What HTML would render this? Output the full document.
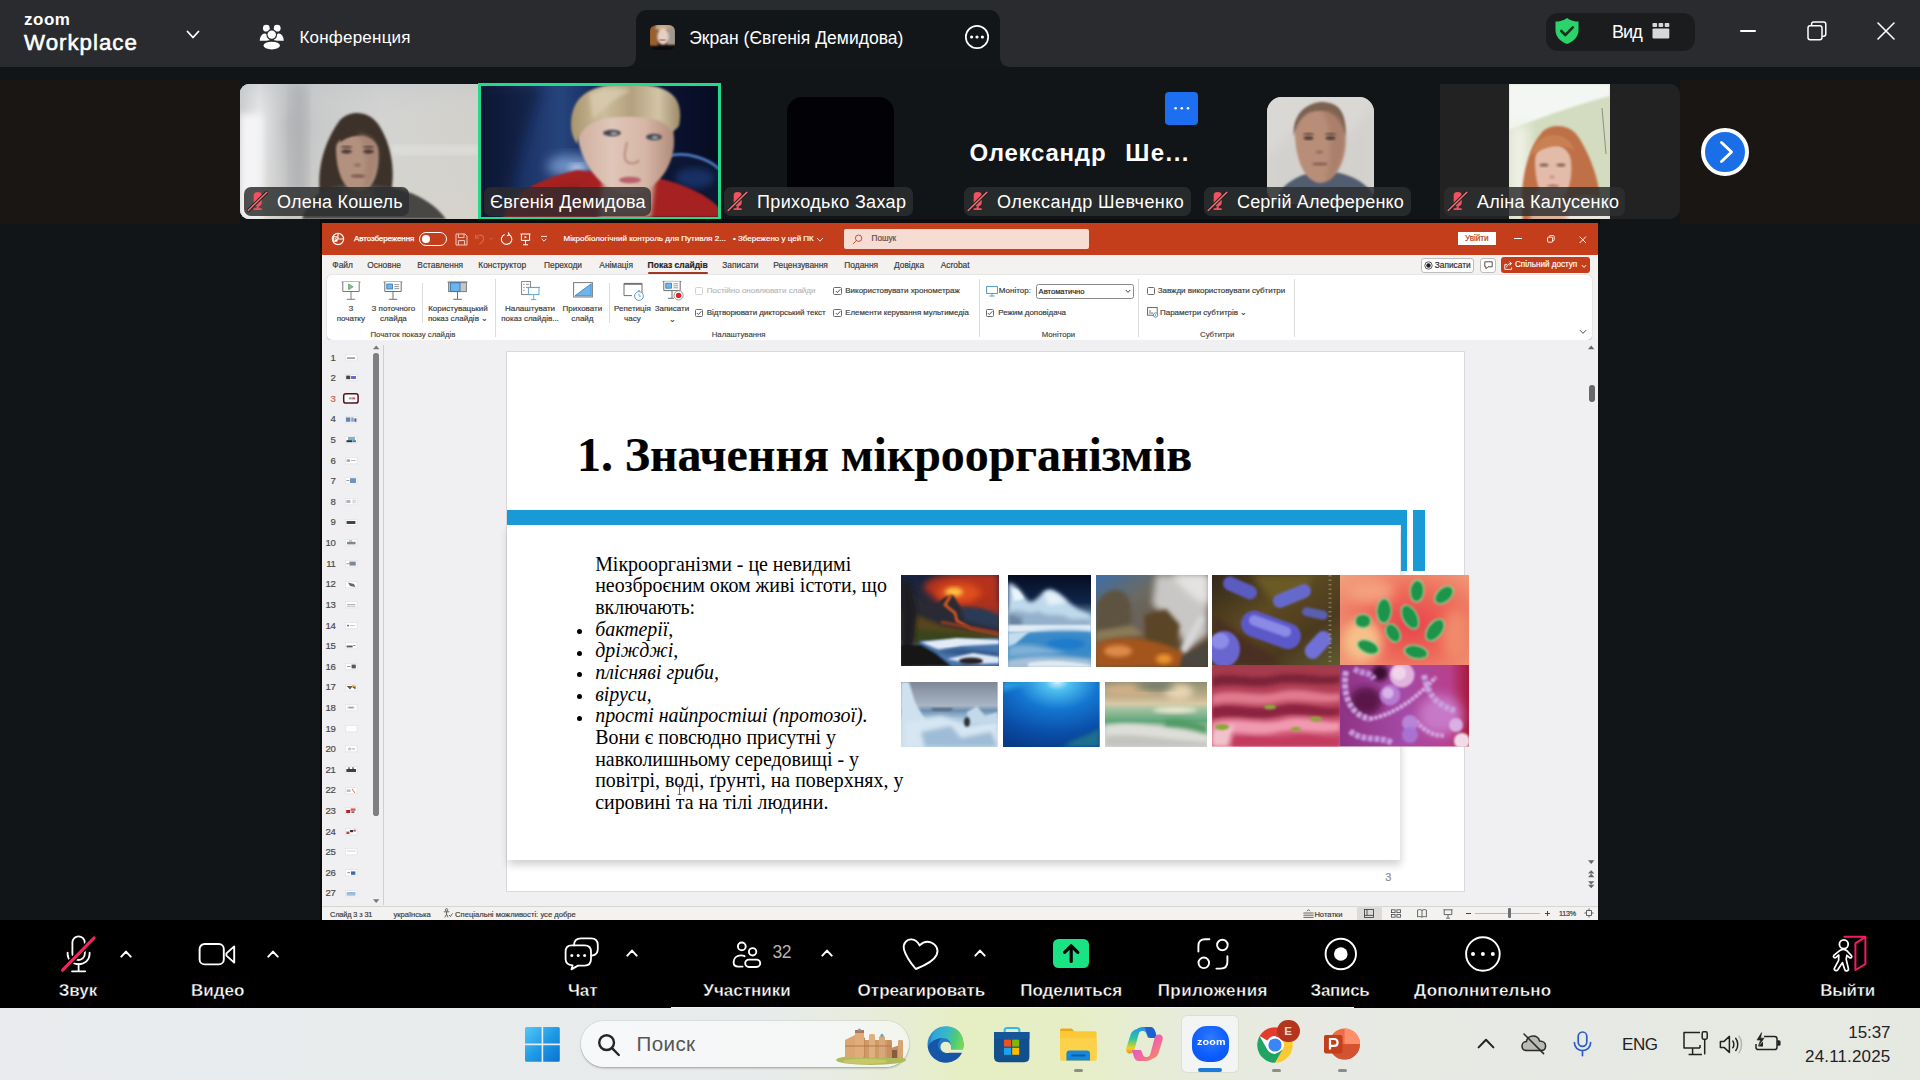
<!DOCTYPE html>
<html lang="ru">
<head>
<meta charset="utf-8">
<title>Zoom Workplace</title>
<style>
*{box-sizing:border-box;margin:0;padding:0}
html,body{width:1920px;height:1080px;overflow:hidden;background:#111518}
body{position:relative;font-family:"Liberation Sans",sans-serif;color:#fff}
.abs{position:absolute}
.t{position:absolute;white-space:nowrap;line-height:1}
svg{position:absolute;overflow:visible}
</style>
</head>
<body>
<!-- ===== Zoom top bar ===== -->
<div class="abs" style="left:0;top:0;width:1920px;height:66.5px;background:#2a2b2e"></div>
<div class="t" style="left:24px;top:11.4px;font-size:17px;font-weight:700;letter-spacing:.5px">zoom</div>
<div class="t" style="left:24px;top:31.5px;font-size:22.3px;letter-spacing:1px;-webkit-text-stroke:.55px #fff">Workplace</div>
<svg style="left:186px;top:30px" width="14" height="10" viewBox="0 0 14 10"><path d="M1.5 1.5 L7 7.5 L12.5 1.5" fill="none" stroke="#fff" stroke-width="1.8" stroke-linecap="round" stroke-linejoin="round"/></svg>
<!-- people icon -->
<svg style="left:259px;top:24px" width="26" height="26" viewBox="0 0 26 26" fill="#fff">
<circle cx="7.3" cy="4.2" r="3.4"/><circle cx="18.2" cy="4.2" r="3.4"/>
<path d="M.7 16.800 A5 7.300 0 0 1 10.700 16.800Z"/><path d="M14.800 16.800 A5 7.300 0 0 1 24.800 16.800Z"/>
<circle cx="12.750" cy="10.600" r="5.400" fill="#2a2b2e"/><circle cx="12.750" cy="10.600" r="4.200"/>
<ellipse cx="12.750" cy="21.300" rx="9.300" ry="5.200" fill="#2a2b2e"/><ellipse cx="12.750" cy="21.600" rx="8.200" ry="3.900"/>
</svg>
<div class="t" style="left:299.4px;top:29.4px;font-size:17px;letter-spacing:.22px">Конференция</div>
<!-- active tab -->
<div class="abs" style="left:636px;top:10px;width:364px;height:58px;background:#121619;border-radius:11px 11px 0 0"></div>
<svg style="left:625px;top:56px" width="11" height="11" viewBox="0 0 11 11"><path d="M11 0 L11 11 L0 11 Q11 11 11 0Z" fill="#121619"/></svg>
<svg style="left:1000px;top:56px" width="11" height="11" viewBox="0 0 11 11"><path d="M0 0 L0 11 L11 11 Q0 11 0 0Z" fill="#121619"/></svg>
<!-- avatar -->
<div class="abs" style="left:650px;top:25px;width:25px;height:25px;border-radius:6px;overflow:hidden;background:#2a1c14">
 <div class="abs" style="left:-1px;top:1px;width:9px;height:21px;background:#9a5f2c;filter:blur(1.3px)"></div>
 <div class="abs" style="left:17px;top:-1px;width:9px;height:21px;background:#a3988d;filter:blur(1.3px)"></div>
 <div class="abs" style="left:5px;top:-2px;width:15px;height:8px;border-radius:50%;background:#c6ab88;filter:blur(1px)"></div>
 <div class="abs" style="left:6.500px;top:3px;width:12px;height:17px;border-radius:50%;background:#e4cfc3;filter:blur(.9px)"></div>
 <div class="abs" style="left:9px;top:14px;width:7px;height:2px;border-radius:50%;background:#c08a84;filter:blur(.6px)"></div>
 <div class="abs" style="left:-2px;top:20.500px;width:29px;height:7px;background:#0c0a0a;filter:blur(1.2px)"></div>
</div>
<div class="t" style="left:689.2px;top:29.7px;font-size:17.5px;letter-spacing:.03px">Экран (Євгенія Демидова)</div>
<svg style="left:964px;top:24px" width="26" height="26" viewBox="0 0 26 26"><circle cx="13" cy="13" r="11.2" fill="none" stroke="#fff" stroke-width="1.7"/><circle cx="7.6" cy="13" r="1.6" fill="#fff"/><circle cx="13" cy="13" r="1.6" fill="#fff"/><circle cx="18.4" cy="13" r="1.6" fill="#fff"/></svg>
<!-- view pill -->
<div class="abs" style="left:1546px;top:13px;width:149px;height:38px;border-radius:12px;background:#1b1c1e"></div>
<svg style="left:1554px;top:17px" width="26" height="28" viewBox="0 0 26 28"><path d="M13 1 C9.5 3.6 5.5 4.6 1.5 4.6 V13 C1.5 20 6.5 24.6 13 27 C19.5 24.6 24.5 20 24.5 13 V4.6 C20.5 4.6 16.5 3.6 13 1Z" fill="#2bd46a"/><path d="M7.3 14 L11.3 18 L18.8 10.4" fill="none" stroke="#17301f" stroke-width="2.6" stroke-linecap="round" stroke-linejoin="round"/></svg>
<div class="t" style="left:1612px;top:23px;font-size:18px;letter-spacing:-.9px">Вид</div>
<svg style="left:1652px;top:22px" width="19" height="18" viewBox="0 0 19 18" fill="#d8d8d8"><rect x="0.5" y="1" width="4.6" height="4" rx=".8"/><rect x="6.6" y="1" width="4.6" height="4" rx=".8"/><rect x="12.7" y="1" width="4.6" height="4" rx=".8"/><rect x="0.5" y="6.4" width="16.8" height="10" rx="1.2"/></svg>
<!-- window controls -->
<div class="abs" style="left:1740px;top:30px;width:16px;height:2px;background:#fff;border-radius:1px"></div>
<svg style="left:1807px;top:21px" width="20" height="20" viewBox="0 0 20 20" fill="none" stroke="#fff" stroke-width="1.5"><rect x="1" y="4.8" width="14" height="14" rx="2.2"/><path d="M4.6 4.6 V3.2 Q4.6 1 6.8 1 H16.6 Q18.8 1 18.8 3.2 V13 Q18.8 15.2 16.6 15.2 H15.2"/></svg>
<svg style="left:1877px;top:22px" width="18" height="18" viewBox="0 0 18 18"><path d="M1 1 L17 17 M17 1 L1 17" stroke="#fff" stroke-width="1.6" stroke-linecap="round"/></svg>
<!-- ===== participant strip ===== -->
<svg width="0" height="0" style="left:0;top:0"><defs>
<symbol id="mm" viewBox="0 0 22 22"><path d="M7 4.6 Q7 1 11.2 1 Q15.4 1 15.4 4.6 V12.4 Q15.4 16 11.2 16 Q7 16 7 12.4Z" fill="#f4505e"/><path d="M10 16 h2.4 v2 h3 v1.8 h-8.4 v-1.8 h3z" fill="#f4505e"/><path d="M1.2 20.4 L20.8 1.4" stroke="#20201f" stroke-width="3.6" stroke-linecap="round"/><path d="M1.2 20.4 L20.8 1.4" stroke="#f0737a" stroke-width="1.5" stroke-linecap="round"/></symbol>
<filter id="b1" x="-20%" y="-20%" width="140%" height="140%"><feGaussianBlur stdDeviation="1"/></filter>
<filter id="b2" x="-20%" y="-20%" width="140%" height="140%"><feGaussianBlur stdDeviation="2"/></filter>
<filter id="b3" x="-20%" y="-20%" width="140%" height="140%"><feGaussianBlur stdDeviation="3.5"/></filter>
<filter id="b6" x="-30%" y="-30%" width="160%" height="160%"><feGaussianBlur stdDeviation="6"/></filter>
</defs></svg>
<style>
.lbl{position:absolute;top:187px;height:29px;border-radius:7px;background:rgba(44,46,48,.845)}
.lbl svg{left:3.4px;top:3.8px}
.lbl span{position:absolute;left:33px;top:5.7px;font-size:18px;line-height:1;white-space:nowrap;color:#fff}
</style>
<div class="abs" style="left:0;top:80px;width:240px;height:144px;background:#1a1614"></div>
<div class="abs" style="left:1680px;top:80px;width:240px;height:144px;background:#1a1614"></div>

<!-- tile 1 -->
<div class="abs" style="left:240px;top:84px;width:240px;height:135px;border-radius:9px 0 0 9px;overflow:hidden;background:#cfd0d0">
<svg width="240" height="135" viewBox="0 0 240 135" style="left:0;top:0">
<defs><linearGradient id="t1g" x1="0" x2="1" y1="0" y2="0"><stop offset="0" stop-color="#c9cacc"/><stop offset=".08" stop-color="#e9eaec"/><stop offset=".2" stop-color="#b9bbbd"/><stop offset=".33" stop-color="#c8c9c9"/><stop offset=".6" stop-color="#d3d3d1"/><stop offset="1" stop-color="#d2d0ca"/></linearGradient>
<linearGradient id="t1v" x1="0" x2="0" y1="0" y2="1"><stop offset="0" stop-color="#c4c7ca" stop-opacity=".55"/><stop offset=".3" stop-color="#d6d7d7" stop-opacity="0"/><stop offset="1" stop-color="#d8d4c8" stop-opacity=".5"/></linearGradient></defs>
<rect width="240" height="135" fill="url(#t1g)"/><rect width="240" height="135" fill="url(#t1v)"/>
<rect x="0" y="30" width="22" height="105" fill="#f4f4f6" filter="url(#b3)"/>
<rect x="52" y="0" width="14" height="110" fill="#a9abae" filter="url(#b6)" opacity=".8"/>
<rect x="150" y="62" width="90" height="8" fill="#e4e4e2" filter="url(#b3)" opacity=".7"/>
<!-- hair -->
<path d="M80 110 C76 80 88 52 100 36 C110 26 128 26 138 40 C152 60 156 90 150 112 Z" fill="#3e3129" filter="url(#b1)"/>
<!-- body -->
<path d="M62 135 C70 108 90 100 116 100 C150 100 186 108 206 135Z" fill="#4a4744" filter="url(#b1)"/>
<!-- face -->
<path d="M96 64 C96 48 136 46 138 66 C140 90 132 108 118 108 C104 108 96 88 96 64Z" fill="#b3917f" filter="url(#b1)"/>
<path d="M100 50 C110 38 128 40 136 52 C124 48 112 50 100 58Z" fill="#3e3129" filter="url(#b1)"/>
<path d="M118 50 C130 50 138 58 138 70 C138 88 130 104 122 107 C128 92 128 66 118 50Z" fill="#a17f6e" opacity=".7" filter="url(#b2)"/>
<ellipse cx="106.500" cy="67.500" rx="5.400" ry="2.200" fill="#4e3b34" filter="url(#b1)"/><ellipse cx="128.500" cy="67.500" rx="5.400" ry="2.200" fill="#4e3b34" filter="url(#b1)"/>
<ellipse cx="106.500" cy="63" rx="6" ry="1.200" fill="#5a463c" filter="url(#b1)"/><ellipse cx="128.500" cy="63" rx="6" ry="1.200" fill="#5a463c" filter="url(#b1)"/>
<ellipse cx="117.500" cy="81" rx="3.400" ry="1.800" fill="#94705f" filter="url(#b1)"/>
<ellipse cx="118" cy="92" rx="7.400" ry="1.700" fill="#835a52" filter="url(#b1)"/>
<path d="M104 104 C112 110 124 110 132 104 L134 114 H102Z" fill="#957565" filter="url(#b2)"/>
</svg></div>
<div class="lbl" style="left:244px;width:165px"><svg width="21" height="21"><use href="#mm"/></svg><span style="letter-spacing:.2px">Олена Кошель</span></div>

<!-- tile 2 (active speaker) -->
<div class="abs" style="left:481px;top:86px;width:238px;height:131px;overflow:hidden;background:#0d1a3a">
<svg width="238" height="131" viewBox="0 0 238 131" style="left:0;top:0;overflow:hidden">
<defs><linearGradient id="t2g" x1="0" x2="1" y1="0" y2="0"><stop offset="0" stop-color="#0b1736"/><stop offset=".18" stop-color="#1c3468"/><stop offset=".34" stop-color="#26447c"/><stop offset=".5" stop-color="#14285a"/><stop offset=".8" stop-color="#0a1230"/><stop offset="1" stop-color="#070c20"/></linearGradient>
<linearGradient id="t2h" x1="0" x2="1" y1="0" y2="0"><stop offset="0" stop-color="#a8956f"/><stop offset=".3" stop-color="#cdbd9c"/><stop offset=".55" stop-color="#b3a07f"/><stop offset=".8" stop-color="#d2c4a6"/><stop offset="1" stop-color="#9c8a68"/></linearGradient>
<linearGradient id="t2f" x1="0" x2="1" y1="0" y2="0"><stop offset="0" stop-color="#cfae9f"/><stop offset=".35" stop-color="#e0c6b8"/><stop offset=".7" stop-color="#d6b6a6"/><stop offset="1" stop-color="#b08b7b"/></linearGradient></defs>
<rect width="238" height="131" fill="url(#t2g)"/>
<path d="M0 0 H60 L20 131 H0Z" fill="#0a1430" opacity=".6" filter="url(#b6)"/>
<ellipse cx="92" cy="80" rx="26" ry="11" fill="#8fb2e6" opacity=".7" filter="url(#b6)"/>
<ellipse cx="96" cy="82" rx="8" ry="4" fill="#dfeaff" opacity=".7" filter="url(#b3)"/>
<path d="M186 70 C206 66 228 74 238 84 V131 H176Z" fill="#0b1530" filter="url(#b1)"/>
<path d="M186 70 C206 65 228 73 238 83" stroke="#5a92e4" stroke-width="2.2" fill="none" filter="url(#b1)"/>
<ellipse cx="214" cy="92" rx="20" ry="10" fill="#1a3a78" opacity=".7" filter="url(#b3)"/>
<!-- red sweater -->
<path d="M22 131 C30 106 62 92 96 84 L176 92 C204 98 228 110 238 122 V131Z" fill="#a62124" filter="url(#b1)"/>
<path d="M40 131 C52 112 76 100 100 96 L96 131Z" fill="#8c1a1e" opacity=".6" filter="url(#b3)"/>
<!-- neck -->
<path d="M122 92 L174 96 L170 131 H118Z" fill="#c49f8f" filter="url(#b2)"/>
<!-- face -->
<path d="M96 40 C96 16 188 18 192 44 C198 72 180 104 152 108 C124 110 96 78 96 40Z" fill="url(#t2f)" filter="url(#b1)"/>
<!-- hair -->
<path d="M90 40 C90 10 108 -2 148 -2 C188 -2 204 10 198 40 C194 44 192 46 190 46 C186 36 178 34 166 32 C150 30 130 30 118 34 C106 38 98 46 96 58 C92 52 90 46 90 40Z" fill="url(#t2h)" filter="url(#b1)"/>
<path d="M108 8 C122 2 140 2 150 4 C138 10 124 20 112 34Z" fill="#d9ccb0" opacity=".8" filter="url(#b2)"/>
<ellipse cx="131" cy="47" rx="9" ry="3.2" fill="#4a4650" filter="url(#b1)"/><ellipse cx="173" cy="51" rx="8" ry="3.2" fill="#4a4650" filter="url(#b1)"/>
<ellipse cx="133" cy="47.6" rx="3.4" ry="2.2" fill="#8a9aa0" filter="url(#b1)"/><ellipse cx="174" cy="51.6" rx="3.2" ry="2.2" fill="#8a9aa0" filter="url(#b1)"/>
<path d="M146 56 C144 66 142 72 146 76 C150 78 156 78 158 74" stroke="#b88f80" stroke-width="2" fill="none" filter="url(#b1)"/>
<ellipse cx="149" cy="94" rx="11" ry="3.2" fill="#b8606c" filter="url(#b1)"/>
</svg></div>
<div class="abs" style="left:478px;top:83px;width:243px;height:137px;border:3px solid #23d98c"></div>
<div class="lbl" style="left:484px;width:167px;background:rgba(46,44,46,.8)"><span style="left:6px;letter-spacing:.25px">Євгенія Демидова</span></div>

<!-- tile 3 -->
<div class="abs" style="left:787px;top:97px;width:107px;height:107px;border-radius:15px;background:#020206"></div>
<div class="lbl" style="left:724px;width:189px"><svg width="21" height="21"><use href="#mm"/></svg><span style="letter-spacing:.35px">Приходько Захар</span></div>

<!-- tile 4 -->
<div class="t" style="left:969.6px;top:140.8px;font-size:24px;font-weight:700;letter-spacing:.78px">Олександр <span style="position:absolute;left:155.6px;top:0;letter-spacing:1.45px">Ше...</span></div>
<div class="abs" style="left:1165px;top:92px;width:33px;height:33px;border-radius:4px;background:#1b6ff0"></div>
<svg style="left:1165px;top:92px" width="33" height="33" fill="#fff"><circle cx="10.6" cy="16.3" r="1.3"/><circle cx="16.8" cy="16.3" r="1.3"/><circle cx="23" cy="16.3" r="1.3"/></svg>
<div class="lbl" style="left:964px;width:227px"><svg width="21" height="21"><use href="#mm"/></svg><span style="letter-spacing:.42px">Олександр Шевченко</span></div>

<!-- tile 5 -->
<div class="abs" style="left:1267px;top:97px;width:107px;height:107px;border-radius:15px;overflow:hidden;background:#d9d7d4">
<svg width="107" height="107" viewBox="0 0 107 107" style="left:0;top:0">
<rect width="107" height="107" fill="#dad8d5"/>
<path d="M0 60 L40 20 L70 50 L107 10 V107 H0Z" fill="#cfcdca" opacity=".6" filter="url(#b3)"/>
<path d="M8 107 C12 86 34 76 54 74 C78 74 100 84 107 100 V107Z" fill="#525d70" filter="url(#b1)"/>
<path d="M28 36 C28 4 78 4 78 38 C80 60 70 84 54 86 C38 86 28 62 28 36Z" fill="#b88e78" filter="url(#b1)"/>
<path d="M27 40 C24 10 50 2 62 6 C76 8 80 24 78 40 C74 22 64 14 52 14 C38 14 30 24 27 40Z" fill="#7c6250" filter="url(#b1)"/>
<path d="M56 14 C70 14 78 24 78 38 C79 58 70 80 58 85 C66 66 66 34 56 14Z" fill="#a47a66" opacity=".7" filter="url(#b2)"/>
<ellipse cx="41.500" cy="41" rx="5" ry="2" fill="#54403a" filter="url(#b1)"/><ellipse cx="63.500" cy="41" rx="5" ry="2" fill="#54403a" filter="url(#b1)"/>
<ellipse cx="41.500" cy="37" rx="6" ry="1.200" fill="#6a5040" filter="url(#b1)"/><ellipse cx="63.500" cy="37" rx="6" ry="1.200" fill="#6a5040" filter="url(#b1)"/>
<ellipse cx="52.500" cy="55" rx="3.600" ry="1.800" fill="#9a6f5c" filter="url(#b1)"/>
<ellipse cx="53" cy="67" rx="8" ry="1.600" fill="#8c5e52" filter="url(#b1)"/>
</svg></div>
<div class="lbl" style="left:1204px;width:207px"><svg width="21" height="21"><use href="#mm"/></svg><span style="letter-spacing:.17px">Сергій Алеференко</span></div>

<!-- tile 6 -->
<div class="abs" style="left:1440px;top:84px;width:240px;height:135px;border-radius:0 10px 10px 0;background:#222222;overflow:hidden">
<svg width="101" height="135" viewBox="0 0 101 135" style="left:69px;top:0;overflow:hidden">
<rect width="101" height="135" fill="#d3dcc0"/>
<path d="M0 0 H101 V12 C70 20 30 34 0 46Z" fill="#f3f6f2" filter="url(#b1)"/>
<rect x="0" y="40" width="20" height="95" fill="#eef0e4" filter="url(#b6)"/>
<g transform="translate(0,5)"><path d="M14 135 C10 100 16 62 34 42 C44 34 60 36 68 46 C82 66 92 96 92 120 L96 135Z" fill="#bf7046" filter="url(#b1)"/>
<path d="M26 72 C26 50 60 50 62 72 C64 92 58 112 46 114 C32 114 26 94 26 72Z" fill="#e2bca8" filter="url(#b1)"/>
<path d="M22 66 C26 42 58 38 66 62 C54 54 40 56 22 66Z" fill="#c98152" filter="url(#b1)"/>
<ellipse cx="35" cy="76" rx="4.600" ry="1.800" fill="#8a6a5c" filter="url(#b1)"/><ellipse cx="52" cy="76" rx="4.600" ry="1.800" fill="#8a6a5c" filter="url(#b1)"/>
<ellipse cx="43" cy="88" rx="2.800" ry="1.600" fill="#c9917c" filter="url(#b1)"/>
<ellipse cx="44" cy="97" rx="6" ry="1.500" fill="#b46e66" filter="url(#b1)"/>
<path d="M26 104 C36 96 50 100 54 108 L60 135 H20Z" fill="#dcb29c" filter="url(#b2)"/>
<path d="M60 112 C76 104 92 108 101 116 V135 H56Z" fill="#ece6e0" filter="url(#b2)"/></g>
<path d="M93 24 L97 70" stroke="#8d8f7e" stroke-width="1" />
</svg></div>
<div class="lbl" style="left:1444px;width:181px"><svg width="21" height="21"><use href="#mm"/></svg><span style="letter-spacing:.27px">Аліна Калусенко</span></div>

<!-- next button -->
<div class="abs" style="left:1701px;top:128px;width:48px;height:48px;border-radius:50%;background:#1a6fe9;border:4.5px solid #fff"></div>
<svg style="left:1701px;top:128px" width="48" height="48"><path d="M20.5 14.5 L30.5 24 L20.5 33.5" fill="none" stroke="#fff" stroke-width="2.9" stroke-linecap="round" stroke-linejoin="round"/></svg>
<!-- ===== PowerPoint window ===== -->
<style>
.pp{position:absolute;left:322px;top:224px;width:1276px;height:696px;background:#f1f0f1;overflow:hidden;font-family:"Liberation Sans",sans-serif;color:#3b3a39}
.pp .t{color:#3b3a39;-webkit-text-stroke:.18px currentColor}
.pp .w{color:#fff}
.rb{position:absolute;-webkit-text-stroke:.18px currentColor;font-size:8px;line-height:10.6px;text-align:center;white-space:nowrap;color:#3b3a39;transform:translateX(-50%)}
.ck{position:absolute;width:8.4px;height:8.4px;border:1px solid #6b6b6b;border-radius:1.5px;background:#fff}
.ck svg{left:.2px;top:.4px}
.gl{position:absolute;-webkit-text-stroke:.15px currentColor;top:106.5px;font-size:7.8px;line-height:1;white-space:nowrap;color:#444}
.vs{position:absolute;width:1px;background:#dcdcdc}
</style>
<div class="abs" style="left:320px;top:219px;width:1280px;height:5px;background:#0c0c0e"></div><div class="abs" style="left:320px;top:219px;width:2px;height:701px;background:#0b0b0d"></div><div class="abs" style="left:322px;top:223px;width:1276px;height:2px;background:#c43e1c"></div>
<div class="pp">
<!-- title bar -->
<div class="abs" style="left:0;top:0;width:1276px;height:31px;background:#c43e1c"></div>
<svg style="left:9px;top:8px" width="14" height="14" viewBox="0 0 14 14"><circle cx="7" cy="7" r="5.6" fill="none" stroke="#fff" stroke-width="1.2"/><path d="M7 1.4 V7 H12.6" fill="none" stroke="#fff" stroke-width="1.1"/><rect x="1.6" y="4.2" width="5" height="5.6" rx=".8" fill="#fff"/><path d="M3.4 8.6 V5.4 H4.6 Q5.6 5.4 5.6 6.3 Q5.6 7.2 4.6 7.2 H3.4" fill="none" stroke="#c43e1c" stroke-width=".8"/></svg>
<div class="t w" style="left:32px;top:11.1px;font-size:8px;letter-spacing:-.1px;-webkit-text-stroke:.25px #fff">Автозбереження</div>
<div class="abs" style="left:97px;top:8px;width:28px;height:13.5px;border:1.1px solid #fff;border-radius:7px"></div>
<div class="abs" style="left:100px;top:11px;width:7.6px;height:7.6px;border-radius:50%;background:#fff"></div>
<!-- save -->
<svg style="left:132.5px;top:8.5px" width="13" height="13" viewBox="0 0 13 13" fill="none" stroke="#f3c9bd" stroke-width="1"><path d="M1 1 H10 L12 3 V12 H1Z"/><path d="M3.4 1 V4.6 H9 V1"/><path d="M3.4 12 V7.6 H9.6 V12"/></svg>
<!-- undo (disabled) -->
<svg style="left:152px;top:9px" width="22" height="12" viewBox="0 0 22 12" fill="none" stroke="#d8694c" stroke-width="1.1"><path d="M1.6 1.4 V5 H5.2"/><path d="M1.8 4.8 C3.6 1.4 8.6 1.2 9.6 4.8 C10.2 7.4 8 9.4 5.4 11"/><path d="M15.5 5 l1.6 1.6 l1.6 -1.6" stroke-width=".9"/></svg>
<!-- redo -->
<svg style="left:178px;top:8px" width="13" height="14" viewBox="0 0 13 14" fill="none" stroke="#fff" stroke-width="1.1"><path d="M4.6 2.4 A5.2 5.2 0 1 0 9 2.6"/><path d="M8.2 .6 L9.4 2.8 L7 3.8"/></svg>
<!-- present -->
<svg style="left:197.5px;top:8.5px" width="11" height="13" viewBox="0 0 11 13" fill="none" stroke="#fff" stroke-width="1"><path d="M.5 1 H10.5"/><path d="M1.4 1 V7.4 H9.6 V1"/><path d="M5.5 7.4 V11.6 M3 11.8 H8"/><path d="M4.6 2.8 L6.8 4.2 L4.6 5.6Z" fill="#fff" stroke="none"/></svg>
<svg style="left:218px;top:11px" width="8" height="8" viewBox="0 0 8 8" fill="none" stroke="#fff" stroke-width=".9"><path d="M1 1.4 H7"/><path d="M1.6 3.8 L4 6.2 L6.4 3.8"/></svg>
<div class="t w" style="left:241.5px;top:11.3px;font-size:8px;letter-spacing:.03px">Мікробіологічний контроль для Путивля 2...</div>
<div class="t w" style="left:411px;top:11.3px;font-size:8px">• Збережено у цей ПК</div>
<svg style="left:494px;top:12.5px" width="8" height="6" viewBox="0 0 8 6" fill="none" stroke="#fff" stroke-width=".9"><path d="M1 1 L4 4.2 L7 1"/></svg>
<!-- search -->
<div class="abs" style="left:521.5px;top:4.5px;width:245px;height:20.5px;border-radius:2px;background:#f7dcd4"></div>
<svg style="left:530px;top:9.5px" width="11" height="11" viewBox="0 0 11 11" fill="none" stroke="#b5553c" stroke-width="1"><circle cx="6.6" cy="4.2" r="3.2"/><path d="M4.4 6.6 L1 10"/></svg>
<div class="t" style="left:549.5px;top:11.1px;font-size:8.2px;color:#5b4a45">Пошук</div>
<!-- sign in / window buttons -->
<div class="abs" style="left:1136px;top:8.3px;width:38px;height:12.4px;background:#fff"></div>
<div class="t" style="left:1143px;top:10.6px;font-size:8.2px;color:#b33c24;letter-spacing:-.05px">Увійти</div>
<div class="abs" style="left:1192px;top:14px;width:8px;height:1px;background:#fff"></div>
<svg style="left:1224.5px;top:11px" width="8" height="8" viewBox="0 0 8 8" fill="none" stroke="#fff" stroke-width=".9"><rect x=".6" y="2.2" width="5" height="5" rx=".8"/><path d="M2.4 2 V1.4 Q2.4 .6 3.2 .6 H6.4 Q7.2 .6 7.2 1.4 V4.8 Q7.2 5.6 6.4 5.6 H5.8"/></svg>
<svg style="left:1256.5px;top:11.5px" width="8" height="8" viewBox="0 0 8 8"><path d="M.6 .6 L7 7 M7 .6 L.6 7" stroke="#fff" stroke-width=".95"/></svg>

<!-- tab row -->
<div class="abs" style="left:0;top:31px;width:1276px;height:84px;background:#f3f2f1"></div>
<div class="t" style="left:10.3px;top:36.6px;font-size:8.4px">Файл</div>
<div class="t" style="left:45.3px;top:36.6px;font-size:8.4px">Основне</div>
<div class="t" style="left:95.3px;top:36.6px;font-size:8.4px">Вставлення</div>
<div class="t" style="left:156.3px;top:36.6px;font-size:8.4px">Конструктор</div>
<div class="t" style="left:222px;top:36.6px;font-size:8.4px">Переходи</div>
<div class="t" style="left:277.3px;top:36.6px;font-size:8.4px">Анімація</div>
<div class="t" style="left:325.6px;top:36.6px;font-size:8.5px;font-weight:700;color:#252423">Показ слайдів</div>
<div class="abs" style="left:325.6px;top:48.3px;width:60.4px;height:1.6px;background:#a4371f;border-radius:1px"></div>
<div class="t" style="left:400.3px;top:36.6px;font-size:8.4px">Записати</div>
<div class="t" style="left:451.3px;top:36.6px;font-size:8.4px">Рецензування</div>
<div class="t" style="left:522.3px;top:36.6px;font-size:8.4px">Подання</div>
<div class="t" style="left:572px;top:36.6px;font-size:8.4px">Довідка</div>
<div class="t" style="left:618.7px;top:36.6px;font-size:8.4px">Acrobat</div>
<!-- right buttons -->
<div class="abs" style="left:1098.8px;top:33.6px;width:53.6px;height:15.2px;border:1px solid #bdbdbd;border-radius:3px;background:#fff"></div>
<svg style="left:1101.6px;top:36.8px" width="9" height="9" viewBox="0 0 9 9"><circle cx="4.5" cy="4.5" r="3.7" fill="none" stroke="#333" stroke-width=".8"/><circle cx="4.5" cy="4.5" r="2.2" fill="#222"/></svg>
<div class="t" style="left:1112.8px;top:37px;font-size:8.3px;color:#2b2b2b">Записати</div>
<div class="abs" style="left:1158px;top:33.6px;width:15.6px;height:15.2px;border:1px solid #bdbdbd;border-radius:3px;background:#fff"></div>
<svg style="left:1161.6px;top:37px" width="9" height="9" viewBox="0 0 9 9" fill="none" stroke="#333" stroke-width=".85"><path d="M.8 .8 H8.2 V5.8 H4 L2 7.8 V5.8 H.8Z"/></svg>
<div class="abs" style="left:1179px;top:33.2px;width:89px;height:16px;border-radius:3px;background:#c43e1c"></div>
<svg style="left:1182.4px;top:36.6px" width="10" height="9" viewBox="0 0 10 9" fill="none" stroke="#fff" stroke-width=".9"><path d="M3 3.4 H.8 V8.4 H7.6 V6.4"/><path d="M2.6 6.2 C3.2 3.6 5 2.6 7 2.6 M5.6 .8 L7.6 2.6 L5.6 4.4"/></svg>
<div class="t w" style="left:1193px;top:37px;font-size:8.2px;letter-spacing:-.05px;-webkit-text-stroke:.15px #fff">Спільний доступ</div>
<svg style="left:1259px;top:39.5px" width="6" height="5" viewBox="0 0 6 5" fill="none" stroke="#fff" stroke-width=".9"><path d="M.8 1 L3 3.4 L5.2 1"/></svg>

<!-- ribbon panel -->
<div class="abs" style="left:5px;top:51px;width:1265px;height:64.5px;background:#fff;border-radius:5px;box-shadow:0 .6px 1.6px rgba(0,0,0,.22)"></div>
<!-- ribbon: group 1 -->
<svg style="left:19px;top:57px" width="20" height="19" viewBox="0 0 20 19" fill="none" stroke="#7a7a7a" stroke-width="1"><path d="M.6 1 H19.4"/><path d="M1.8 1 V10.5 H18.2 V1" fill="#fff"/><path d="M10 10.5 V18 M5.8 18.3 H14.2"/><path d="M7.6 3 L12.2 5.8 L7.6 8.6Z" fill="#7fc48a" stroke="#4e9a5c" stroke-width=".7"/></svg>
<div class="rb" style="left:28.8px;top:79.7px">З<br>початку</div>
<svg style="left:61.4px;top:57px" width="20" height="19" viewBox="0 0 20 19" fill="none" stroke="#6f6f6f" stroke-width="1"><path d="M.6 1 H19.4"/><path d="M1.8 1 V10.5 H18.2 V1" fill="#fff"/><path d="M10 10.5 V18 M5.8 18.3 H14.2"/><rect x="3.8" y="3" width="5.6" height="5" fill="#6eb5ee" stroke="#2f78b8" stroke-width=".8"/><path d="M11.4 3.6 H16.2 M11.4 5.6 H16.2 M11.4 7.6 H16.2" stroke-width=".7"/></svg>
<div class="rb" style="left:71.4px;top:79.7px">З поточного<br>слайда</div>
<div class="vs" style="left:100.4px;top:59px;height:40px"></div>
<svg style="left:125.4px;top:57px" width="21" height="19" viewBox="0 0 21 19" fill="none" stroke="#6f6f6f" stroke-width="1"><path d="M.6 1 H20.4"/><rect x="1.6" y="1.6" width="17.8" height="9" fill="#c9c6c2" stroke="#7d7d7d"/><rect x="3.6" y="1.8" width="9.4" height="8.6" fill="#6eb5ee" stroke="#2f78b8" stroke-width=".9"/><path d="M10.5 10.8 V18 M6.2 18.3 H14.8"/></svg>
<div class="rb" style="left:136px;top:79.7px">Користувацький<br>показ слайдів ⌄</div>
<div class="gl" style="left:48.5px">Початок показу слайдів</div>
<div class="vs" style="left:173.2px;top:55px;height:58px"></div>
<!-- group 2 -->
<svg style="left:199px;top:57px" width="20" height="20" viewBox="0 0 20 20" fill="none" stroke="#7a7a7a" stroke-width=".9"><rect x=".6" y=".6" width="9" height="13" fill="#fff"/><path d="M2.2 3.4 h1.4 M2.2 6.4 h1.4 M2.2 9.4 h1.4 M5 3.4 h3 M5 6.4 h2" stroke-width=".8"/><rect x="7.4" y="6.6" width="10.6" height="7" fill="#fff" stroke="#5e9fce"/><path d="M6.4 6.4 H19" stroke="#5e9fce"/><path d="M12.7 13.6 V18.4 M10 18.6 H15.4" stroke="#5e9fce"/></svg>
<div class="rb" style="left:208px;top:79.7px">Налаштувати<br>показ слайдів...</div>
<svg style="left:250.6px;top:58px" width="20" height="16" viewBox="0 0 20 16"><rect x=".6" y=".6" width="18.8" height="14.4" fill="#fff" stroke="#7a7a7a"/><path d="M2 13.8 L18.2 1.8 V13.8Z" fill="#6eb5ee" stroke="#2f78b8" stroke-width=".8"/></svg>
<div class="rb" style="left:260.4px;top:79.7px">Приховати<br>слайд</div>
<div class="vs" style="left:286.6px;top:59px;height:40px"></div>
<svg style="left:301px;top:58px" width="22" height="20" viewBox="0 0 22 20" fill="none" stroke="#6f6f6f" stroke-width="1"><path d="M1 1.4 H19 V13.6 H11" /><path d="M1 1.4 V13.6 H9" /><path d="M1 2 H19" stroke-width="1.6"/><circle cx="16" cy="14" r="4.4" fill="#fff" stroke="#5e9fce" stroke-width="1"/><path d="M16 11.6 V14.2 H17.8 M15 8.6 H17" stroke="#5e9fce" stroke-width=".8"/></svg>
<div class="rb" style="left:310.4px;top:79.7px">Репетиція<br>часу</div>
<svg style="left:340px;top:56px" width="22" height="22" viewBox="0 0 22 22" fill="none" stroke="#6f6f6f" stroke-width="1"><path d="M.6 1.4 H19.4"/><path d="M1.8 1.4 V10.6 H18.2 V1.4" fill="#fff"/><path d="M10 10.6 V18 M6 18.3 H12"/><rect x="3.8" y="3.2" width="5.6" height="5" fill="#6eb5ee" stroke="#2f78b8" stroke-width=".8"/><path d="M11.4 3.8 H16.2 M11.4 5.8 H16.2 M11.4 7.8 H16.2" stroke-width=".7"/><circle cx="16.6" cy="15.4" r="4.6" fill="#fff" stroke="#8a8a8a" stroke-width=".9"/><circle cx="16.6" cy="15.4" r="2.7" fill="#e0202a" stroke="none"/></svg>
<div class="rb" style="left:350px;top:80.3px">Записати<br>⌄</div>
<!-- checkboxes -->
<div class="ck" style="left:372.6px;top:63px;border-color:#d2d2d2"></div>
<div class="t" style="left:384.7px;top:63.4px;font-size:8px;color:#b9b9b9">Постійно оновлювати слайди</div>
<div class="ck" style="left:372.6px;top:84.7px"><svg width="6" height="6" viewBox="0 0 6 6"><path d="M.8 3 L2.4 4.6 L5.4 1.2" fill="none" stroke="#444" stroke-width=".9"/></svg></div>
<div class="t" style="left:384.7px;top:85.2px;font-size:8px;letter-spacing:-.06px">Відтворювати дикторський текст</div>
<div class="ck" style="left:511.4px;top:63px"><svg width="6" height="6" viewBox="0 0 6 6"><path d="M.8 3 L2.4 4.6 L5.4 1.2" fill="none" stroke="#444" stroke-width=".9"/></svg></div>
<div class="t" style="left:523.3px;top:63.4px;font-size:8px;letter-spacing:-.02px">Використовувати хронометраж</div>
<div class="ck" style="left:511.4px;top:84.7px"><svg width="6" height="6" viewBox="0 0 6 6"><path d="M.8 3 L2.4 4.6 L5.4 1.2" fill="none" stroke="#444" stroke-width=".9"/></svg></div>
<div class="t" style="left:523.3px;top:85.2px;font-size:7.85px">Елементи керування мультимедіа</div>
<div class="gl" style="left:389.7px">Налаштування</div>
<div class="vs" style="left:656.6px;top:55px;height:58px"></div>
<!-- monitors -->
<svg style="left:664px;top:62px" width="12" height="11" viewBox="0 0 12 11" fill="none" stroke="#3f8fc4" stroke-width=".9"><rect x=".6" y=".6" width="10.8" height="6.8" fill="#fff"/><path d="M6 7.6 V9.6 M3.4 10 H8.6"/></svg>
<div class="t" style="left:676.8px;top:63.4px;font-size:8px">Монітор:</div>
<div class="abs" style="left:713.6px;top:60px;width:98px;height:15px;border:1px solid #8a8a8a;border-radius:2.5px;background:#fff"></div>
<div class="t" style="left:716.6px;top:63.6px;font-size:7.6px;color:#222">Автоматично</div>
<svg style="left:802.6px;top:65.4px" width="6" height="5" viewBox="0 0 6 5" fill="none" stroke="#333" stroke-width=".9"><path d="M.8 1 L3 3.4 L5.2 1"/></svg>
<div class="ck" style="left:664px;top:84.7px"><svg width="6" height="6" viewBox="0 0 6 6"><path d="M.8 3 L2.4 4.6 L5.4 1.2" fill="none" stroke="#444" stroke-width=".9"/></svg></div>
<div class="t" style="left:676.2px;top:85.2px;font-size:8px;letter-spacing:-.04px">Режим доповідача</div>
<div class="gl" style="left:719.7px">Монітори</div>
<div class="vs" style="left:816.4px;top:55px;height:58px"></div>
<!-- subtitles -->
<div class="ck" style="left:824.6px;top:63px"></div>
<div class="t" style="left:835.7px;top:63.4px;font-size:8px;letter-spacing:-.02px">Завжди використовувати субтитри</div>
<svg style="left:824.6px;top:83.3px" width="12" height="11" viewBox="0 0 12 11" fill="none" stroke="#555" stroke-width=".9"><rect x=".6" y=".6" width="9.6" height="7.6" fill="#fff"/><path d="M2 6 H6 M2 4 H4" stroke-width=".8"/><circle cx="8.6" cy="8" r="2.2" fill="#fff" stroke="#3f8fc4"/><circle cx="8.6" cy="8" r=".7" fill="#3f8fc4" stroke="none"/></svg>
<div class="t" style="left:838px;top:85.2px;font-size:8px;letter-spacing:-.03px">Параметри субтитрів ⌄</div>
<div class="gl" style="left:878px">Субтитри</div>
<div class="vs" style="left:972.4px;top:55px;height:58px"></div>
<svg style="left:1257px;top:105.4px" width="8" height="6" viewBox="0 0 8 6" fill="none" stroke="#444" stroke-width=".95"><path d="M1 1.2 L4 4.4 L7 1.2"/></svg>
<!-- slide thumbnails pane -->
<div class="abs" style="left:0;top:115.5px;width:1276px;height:566.5px;background:#f0eff1"></div>
<div class="t" style="left:0;width:13.6px;text-align:right;top:128.5px;font-size:9.6px;letter-spacing:-.25px;color:#4a4a4a">1</div>
<svg style="left:23.2px;top:129.8px" width="12.4" height="7.2" viewBox="0 0 12.4 7.2"><rect x=".3" y=".3" width="11.8" height="6.6" fill="#fdfdfd" stroke="#dedde0" stroke-width=".6"/><rect x="2" y="3.4" width="8" height="1.4" fill="#8a8a8a"/></svg>
<div class="t" style="left:0;width:13.6px;text-align:right;top:149.2px;font-size:9.6px;letter-spacing:-.25px;color:#4a4a4a">2</div>
<svg style="left:23.2px;top:150.4px" width="12.4" height="7.2" viewBox="0 0 12.4 7.2"><rect x=".3" y=".3" width="11.8" height="6.6" fill="#fdfdfd" stroke="#dedde0" stroke-width=".6"/><rect x="1.2" y="1.6" width="4" height="3.6" fill="#444"/><rect x="6" y="2" width="5" height="3" fill="#6a6ad0"/></svg>
<div class="t" style="left:0;width:13.6px;text-align:right;top:169.8px;font-size:9.6px;letter-spacing:-.25px;color:#c85f47">3</div>
<svg style="left:21.4px;top:169.1px" width="16" height="11" viewBox="-1.8 -1.8 16 11"><rect x="-1.1" y="-1.1" width="14.4" height="9.4" rx="2.2" fill="#fff" stroke="#5a0f1e" stroke-width="1.5"/><rect x="4" y="2.6" width="3" height="2" fill="#7ab08a"/><rect x="7.4" y="2.6" width="3" height="2" fill="#c05a6a"/></svg>
<div class="t" style="left:0;width:13.6px;text-align:right;top:190.4px;font-size:9.6px;letter-spacing:-.25px;color:#4a4a4a">4</div>
<svg style="left:23.2px;top:191.6px" width="12.4" height="7.2" viewBox="0 0 12.4 7.2"><rect x=".3" y=".3" width="11.8" height="6.6" fill="#fdfdfd" stroke="#dedde0" stroke-width=".6"/><rect x="1" y="1.4" width="4.4" height="4.4" fill="#5f86b5"/><rect x="6.2" y="1.4" width="2.6" height="4.4" fill="#8aa3c4"/><rect x="9.4" y="2.4" width="2" height="3.4" fill="#3c5f90"/></svg>
<div class="t" style="left:0;width:13.6px;text-align:right;top:211.0px;font-size:9.6px;letter-spacing:-.25px;color:#4a4a4a">5</div>
<svg style="left:23.2px;top:212.2px" width="12.4" height="7.2" viewBox="0 0 12.4 7.2"><rect x=".3" y=".3" width="11.8" height="6.6" fill="#fdfdfd" stroke="#dedde0" stroke-width=".6"/><rect x="3" y="1" width="7" height="3" fill="#6fb6e0"/><rect x="1.5" y="4.2" width="6" height="2" fill="#333"/><rect x="8" y="4.2" width="3" height="2" fill="#4a7ab0"/></svg>
<div class="t" style="left:0;width:13.6px;text-align:right;top:231.6px;font-size:9.6px;letter-spacing:-.25px;color:#4a4a4a">6</div>
<svg style="left:23.2px;top:232.8px" width="12.4" height="7.2" viewBox="0 0 12.4 7.2"><rect x=".3" y=".3" width="11.8" height="6.6" fill="#fdfdfd" stroke="#dedde0" stroke-width=".6"/><rect x="1.6" y="2.4" width="3.4" height="2.4" fill="#9aa3ad"/><rect x="6" y="3" width="4.6" height="1" fill="#b5b5b5"/></svg>
<div class="t" style="left:0;width:13.6px;text-align:right;top:252.2px;font-size:9.6px;letter-spacing:-.25px;color:#4a4a4a">7</div>
<svg style="left:23.2px;top:253.4px" width="12.4" height="7.2" viewBox="0 0 12.4 7.2"><rect x=".3" y=".3" width="11.8" height="6.6" fill="#fdfdfd" stroke="#dedde0" stroke-width=".6"/><rect x="5" y="1.2" width="6" height="4.8" fill="#6f93c0"/><rect x="1.4" y="3" width="3" height="1" fill="#999"/></svg>
<div class="t" style="left:0;width:13.6px;text-align:right;top:272.8px;font-size:9.6px;letter-spacing:-.25px;color:#4a4a4a">8</div>
<svg style="left:23.2px;top:274.0px" width="12.4" height="7.2" viewBox="0 0 12.4 7.2"><rect x=".3" y=".3" width="11.8" height="6.6" fill="#fdfdfd" stroke="#dedde0" stroke-width=".6"/><rect x="1.4" y="2" width="4" height="3" fill="#a9b4c0"/><rect x="7.4" y="1.6" width="3.4" height="3.8" fill="#d5d9de"/></svg>
<div class="t" style="left:0;width:13.6px;text-align:right;top:293.4px;font-size:9.6px;letter-spacing:-.25px;color:#4a4a4a">9</div>
<svg style="left:23.2px;top:294.6px" width="12.4" height="7.2" viewBox="0 0 12.4 7.2"><rect x=".3" y=".3" width="11.8" height="6.6" fill="#fdfdfd" stroke="#dedde0" stroke-width=".6"/><rect x="1.6" y="2" width="8.8" height="3" fill="#3c4653"/></svg>
<div class="t" style="left:0;width:13.6px;text-align:right;top:314.0px;font-size:9.6px;letter-spacing:-.25px;color:#4a4a4a">10</div>
<svg style="left:23.2px;top:315.2px" width="12.4" height="7.2" viewBox="0 0 12.4 7.2"><rect x=".3" y=".3" width="11.8" height="6.6" fill="#fdfdfd" stroke="#dedde0" stroke-width=".6"/><rect x="2" y="2.8" width="8.6" height="2.6" fill="#7d8895"/><rect x="4" y="1.4" width="3" height="1.2" fill="#9aa"/></svg>
<div class="t" style="left:0;width:13.6px;text-align:right;top:334.6px;font-size:9.6px;letter-spacing:-.25px;color:#4a4a4a">11</div>
<svg style="left:23.2px;top:335.8px" width="12.4" height="7.2" viewBox="0 0 12.4 7.2"><rect x=".3" y=".3" width="11.8" height="6.6" fill="#fdfdfd" stroke="#dedde0" stroke-width=".6"/><rect x="4.4" y="1.6" width="6.4" height="4" fill="#7b8794"/><rect x="1.4" y="3" width="2.4" height="1.4" fill="#aab"/></svg>
<div class="t" style="left:0;width:13.6px;text-align:right;top:355.3px;font-size:9.6px;letter-spacing:-.25px;color:#4a4a4a">12</div>
<svg style="left:23.2px;top:356.5px" width="12.4" height="7.2" viewBox="0 0 12.4 7.2"><rect x=".3" y=".3" width="11.8" height="6.6" fill="#fdfdfd" stroke="#dedde0" stroke-width=".6"/><path d="M3 1.6 L9 3 L10.4 6 L5 5Z" fill="#5d6c66"/></svg>
<div class="t" style="left:0;width:13.6px;text-align:right;top:375.9px;font-size:9.6px;letter-spacing:-.25px;color:#4a4a4a">13</div>
<svg style="left:23.2px;top:377.1px" width="12.4" height="7.2" viewBox="0 0 12.4 7.2"><rect x=".3" y=".3" width="11.8" height="6.6" fill="#fdfdfd" stroke="#dedde0" stroke-width=".6"/><rect x="2" y="3.2" width="8.4" height="1" fill="#9aa0a8"/><rect x="2" y="5" width="8.4" height=".7" fill="#b0b5bb"/></svg>
<div class="t" style="left:0;width:13.6px;text-align:right;top:396.5px;font-size:9.6px;letter-spacing:-.25px;color:#4a4a4a">14</div>
<svg style="left:23.2px;top:397.7px" width="12.4" height="7.2" viewBox="0 0 12.4 7.2"><rect x=".3" y=".3" width="11.8" height="6.6" fill="#fdfdfd" stroke="#dedde0" stroke-width=".6"/><rect x="2" y="2.8" width="2" height="1.6" fill="#778"/><rect x="5" y="3.2" width="5" height=".8" fill="#bbb"/></svg>
<div class="t" style="left:0;width:13.6px;text-align:right;top:417.1px;font-size:9.6px;letter-spacing:-.25px;color:#4a4a4a">15</div>
<svg style="left:23.2px;top:418.3px" width="12.4" height="7.2" viewBox="0 0 12.4 7.2"><rect x=".3" y=".3" width="11.8" height="6.6" fill="#fdfdfd" stroke="#dedde0" stroke-width=".6"/><rect x="1.6" y="3.6" width="6" height="1.8" fill="#555"/><rect x="8" y="3" width="2.6" height="1" fill="#999"/></svg>
<div class="t" style="left:0;width:13.6px;text-align:right;top:437.7px;font-size:9.6px;letter-spacing:-.25px;color:#4a4a4a">16</div>
<svg style="left:23.2px;top:438.9px" width="12.4" height="7.2" viewBox="0 0 12.4 7.2"><rect x=".3" y=".3" width="11.8" height="6.6" fill="#fdfdfd" stroke="#dedde0" stroke-width=".6"/><rect x="6.6" y="1.6" width="4.2" height="3.8" fill="#556"/><rect x="2" y="3" width="3.6" height="1" fill="#99a"/></svg>
<div class="t" style="left:0;width:13.6px;text-align:right;top:458.3px;font-size:9.6px;letter-spacing:-.25px;color:#4a4a4a">17</div>
<svg style="left:23.2px;top:459.5px" width="12.4" height="7.2" viewBox="0 0 12.4 7.2"><rect x=".3" y=".3" width="11.8" height="6.6" fill="#fdfdfd" stroke="#dedde0" stroke-width=".6"/><path d="M1.6 2 L5 5.6 L7 3 L10.6 5.6 V2Z" fill="#6b5b45"/><rect x="7" y="1.4" width="3.4" height="1.6" fill="#c9a050"/></svg>
<div class="t" style="left:0;width:13.6px;text-align:right;top:478.9px;font-size:9.6px;letter-spacing:-.25px;color:#4a4a4a">18</div>
<svg style="left:23.2px;top:480.1px" width="12.4" height="7.2" viewBox="0 0 12.4 7.2"><rect x=".3" y=".3" width="11.8" height="6.6" fill="#fdfdfd" stroke="#dedde0" stroke-width=".6"/><rect x="2.4" y="2.4" width="7" height="2.4" fill="#c9ccd1"/><rect x="4" y="3" width="4" height="1" fill="#999"/></svg>
<div class="t" style="left:0;width:13.6px;text-align:right;top:499.5px;font-size:9.6px;letter-spacing:-.25px;color:#4a4a4a">19</div>
<svg style="left:23.2px;top:500.7px" width="12.4" height="7.2" viewBox="0 0 12.4 7.2"><rect x=".3" y=".3" width="11.8" height="6.6" fill="#fdfdfd" stroke="#dedde0" stroke-width=".6"/></svg>
<div class="t" style="left:0;width:13.6px;text-align:right;top:520.1px;font-size:9.6px;letter-spacing:-.25px;color:#4a4a4a">20</div>
<svg style="left:23.2px;top:521.3px" width="12.4" height="7.2" viewBox="0 0 12.4 7.2"><rect x=".3" y=".3" width="11.8" height="6.6" fill="#fdfdfd" stroke="#dedde0" stroke-width=".6"/><rect x="3" y="2.6" width="3" height="2.8" fill="#c5c8cc"/><rect x="6.6" y="3.4" width="3.4" height="1" fill="#aaa"/></svg>
<div class="t" style="left:0;width:13.6px;text-align:right;top:540.8px;font-size:9.6px;letter-spacing:-.25px;color:#4a4a4a">21</div>
<svg style="left:23.2px;top:541.9px" width="12.4" height="7.2" viewBox="0 0 12.4 7.2"><rect x=".3" y=".3" width="11.8" height="6.6" fill="#fdfdfd" stroke="#dedde0" stroke-width=".6"/><rect x="1.4" y="3" width="9.6" height="3" fill="#3a3f47"/><rect x="3" y="1.4" width="2" height="1.4" fill="#667"/><rect x="7" y="1.4" width="2" height="1.4" fill="#667"/></svg>
<div class="t" style="left:0;width:13.6px;text-align:right;top:561.4px;font-size:9.6px;letter-spacing:-.25px;color:#4a4a4a">22</div>
<svg style="left:23.2px;top:562.6px" width="12.4" height="7.2" viewBox="0 0 12.4 7.2"><rect x=".3" y=".3" width="11.8" height="6.6" fill="#fdfdfd" stroke="#dedde0" stroke-width=".6"/><rect x="1.6" y="2.4" width="4" height="2.6" fill="#b9bdc3"/><path d="M7 2 L10 6" stroke="#d66" stroke-width="1"/></svg>
<div class="t" style="left:0;width:13.6px;text-align:right;top:582.0px;font-size:9.6px;letter-spacing:-.25px;color:#4a4a4a">23</div>
<svg style="left:23.2px;top:583.2px" width="12.4" height="7.2" viewBox="0 0 12.4 7.2"><rect x=".3" y=".3" width="11.8" height="6.6" fill="#fdfdfd" stroke="#dedde0" stroke-width=".6"/><rect x="1.2" y="3" width="4" height="3" fill="#b3202c"/><rect x="5.6" y="1.4" width="5" height="2.4" fill="#d65a62"/><rect x="6.4" y="4.4" width="3" height="1.4" fill="#444"/></svg>
<div class="t" style="left:0;width:13.6px;text-align:right;top:602.6px;font-size:9.6px;letter-spacing:-.25px;color:#4a4a4a">24</div>
<svg style="left:23.2px;top:603.8px" width="12.4" height="7.2" viewBox="0 0 12.4 7.2"><rect x=".3" y=".3" width="11.8" height="6.6" fill="#fdfdfd" stroke="#dedde0" stroke-width=".6"/><rect x="1.4" y="3.6" width="3" height="2.4" fill="#c03a44"/><rect x="5" y="2" width="3" height="2.2" fill="#334"/><rect x="8.4" y="1.6" width="2.4" height="2" fill="#b55"/></svg>
<div class="t" style="left:0;width:13.6px;text-align:right;top:623.2px;font-size:9.6px;letter-spacing:-.25px;color:#4a4a4a">25</div>
<svg style="left:23.2px;top:624.4px" width="12.4" height="7.2" viewBox="0 0 12.4 7.2"><rect x=".3" y=".3" width="11.8" height="6.6" fill="#fdfdfd" stroke="#dedde0" stroke-width=".6"/><rect x="2" y="2.6" width="8.6" height=".8" fill="#c4c6c9"/></svg>
<div class="t" style="left:0;width:13.6px;text-align:right;top:643.8px;font-size:9.6px;letter-spacing:-.25px;color:#4a4a4a">26</div>
<svg style="left:23.2px;top:645.0px" width="12.4" height="7.2" viewBox="0 0 12.4 7.2"><rect x=".3" y=".3" width="11.8" height="6.6" fill="#fdfdfd" stroke="#dedde0" stroke-width=".6"/><rect x="6" y="2.4" width="4.4" height="3.4" fill="#3f6aa8"/><rect x="2.4" y="3" width="2.6" height="1.2" fill="#99a"/></svg>
<div class="t" style="left:0;width:13.6px;text-align:right;top:664.4px;font-size:9.6px;letter-spacing:-.25px;color:#4a4a4a">27</div>
<svg style="left:23.2px;top:665.6px" width="12.4" height="7.2" viewBox="0 0 12.4 7.2"><rect x=".3" y=".3" width="11.8" height="6.6" fill="#fdfdfd" stroke="#dedde0" stroke-width=".6"/><rect x="1.6" y="2.4" width="9" height="1.2" fill="#5f8fc4"/><rect x="1.6" y="4.2" width="9" height="1.4" fill="#8fb2d8"/></svg>
<!-- thumbs scrollbar -->
<svg style="left:50.6px;top:120.6px" width="6.4" height="4.4" viewBox="0 0 6.4 4.4"><path d="M0 4.2 L3.2 .4 L6.4 4.2Z" fill="#777"/></svg>
<div class="abs" style="left:51px;top:129px;width:5.6px;height:463px;border-radius:2.8px;background:#7f7f80"></div>
<svg style="left:50.6px;top:675px" width="6.4" height="4.4" viewBox="0 0 6.4 4.4"><path d="M0 .2 L3.2 4 L6.4 .2Z" fill="#777"/></svg>
<div class="abs" style="left:61px;top:121px;width:1px;height:560px;background:#cfcfd1"></div>
<!-- slide -->
<div class="abs" style="left:185.3px;top:128.3px;width:957.2px;height:538.7px;background:#fff;box-shadow:0 0 0 .8px #d4d3d5"></div>
<div class="t" style="left:255px;top:206.8px;font-family:'Liberation Serif',serif;font-weight:700;font-size:48px;color:#000;letter-spacing:-.08px">1. Значення мікроорганізмів</div>
<!-- content card w/ shadow -->
<div class="abs" style="left:185.3px;top:300px;width:892.8px;height:336.3px;background:#fff;box-shadow:1px 5px 8px rgba(0,0,0,.18)"></div>
<div class="abs" style="left:185.3px;top:285.6px;width:899.4px;height:15.8px;background:#199ad6"></div>
<div class="abs" style="left:1078.8px;top:300px;width:5.9px;height:46.6px;background:#199ad6"></div>
<div class="abs" style="left:1091px;top:285.6px;width:12px;height:61px;background:#199ad6"></div>
<!-- body text -->
<div class="abs" style="left:273.2px;top:329.6px;width:340px;font-family:'Liberation Serif',serif;font-size:19.9px;line-height:21.68px;color:#000;white-space:nowrap">
Мікроорганізми - це невидимі<br>неозброєним оком живі істоти, що<br>включають:<br>
<i>бактерії,</i><br><i>дріжджі,</i><br><i>плісняві гриби,</i><br><i>віруси,</i><br><i>прості найпростіші (протозої).</i><br>
Вони є повсюдно присутні у<br>навколишньому середовищі - у<br>повітрі, воді, ґрунті, на поверхнях, у<br>сировині та на тілі людини.
</div>
<div class="abs" style="left:255.2px;top:404.8px;width:5px;height:5px;border-radius:50%;background:#000"></div>
<div class="abs" style="left:255.2px;top:426.5px;width:5px;height:5px;border-radius:50%;background:#000"></div>
<div class="abs" style="left:255.2px;top:448.2px;width:5px;height:5px;border-radius:50%;background:#000"></div>
<div class="abs" style="left:255.2px;top:469.9px;width:5px;height:5px;border-radius:50%;background:#000"></div>
<div class="abs" style="left:255.2px;top:491.6px;width:5px;height:5px;border-radius:50%;background:#000"></div>
<div class="t" style="left:1063.2px;top:648.4px;font-size:11px;color:#8a8a8a">3</div>
<!-- I-beam cursor -->
<svg style="left:354.6px;top:560px" width="5" height="11" viewBox="0 0 5 11" fill="none" stroke="#444" stroke-width=".8"><path d="M.6 .6 H4.4 M2.5 .6 V10.4 M.6 10.4 H4.4"/></svg>
<!-- editing area scrollbar -->
<svg style="left:1266.4px;top:120.6px" width="6.4" height="4.4" viewBox="0 0 6.4 4.4"><path d="M0 4.2 L3.2 .4 L6.4 4.2Z" fill="#666"/></svg>
<div class="abs" style="left:1267.2px;top:161px;width:5.8px;height:16.6px;border-radius:2.9px;background:#68686a"></div>
<svg style="left:1266.4px;top:636px" width="6.4" height="4.4" viewBox="0 0 6.4 4.4"><path d="M0 .2 L3.2 4 L6.4 .2Z" fill="#666"/></svg>
<svg style="left:1266.4px;top:645.6px" width="6.4" height="7.4" viewBox="0 0 6.4 7.4"><path d="M0 3.6 L3.2 .2 L6.4 3.6Z M0 7.2 L3.2 3.8 L6.4 7.2Z" fill="#666"/></svg>
<svg style="left:1266.4px;top:656.6px" width="6.4" height="7.4" viewBox="0 0 6.4 7.4"><path d="M0 .2 L3.2 3.6 L6.4 .2Z M0 3.8 L3.2 7.2 L6.4 3.8Z" fill="#666"/></svg>
<!-- photos (approximated) : coordinates relative to pp (abs -322,-224) -->
<!-- img1 volcano -->
<svg style="left:579.2px;top:350.7px" width="98" height="91" viewBox="0 0 98 91"><defs><clipPath id="c1"><rect width="98" height="91"/></clipPath><linearGradient id="p1" x1="0" x2="0" y1="0" y2="1"><stop offset="0" stop-color="#14233e"/><stop offset=".35" stop-color="#2c2a38"/><stop offset=".6" stop-color="#3e3a20"/><stop offset=".72" stop-color="#4a78b0"/><stop offset="1" stop-color="#35557f"/></linearGradient></defs>
<g clip-path="url(#c1)"><rect width="98" height="91" fill="url(#p1)"/>
<path d="M22 12 C30 0 50 -4 98 -2 V42 C84 40 72 32 62 34 C50 32 34 28 22 12Z" fill="#b6331b" filter="url(#b3)"/>
<ellipse cx="58" cy="18" rx="22" ry="10" fill="#df4f1d" filter="url(#b3)"/>
<ellipse cx="53" cy="17" rx="9" ry="4.400" fill="#ffc244" filter="url(#b2)"/>
<path d="M0 12 L14 20 L30 34 L44 22 L52 20 L62 36 L98 52 V66 H0Z" fill="#2c2934" filter="url(#b1)"/>
<path d="M60 32 L98 34 V54 L64 46Z" fill="#2a3a55" filter="url(#b2)"/>
<path d="M74 26 C82 22 92 24 98 28 V40 C90 36 82 34 74 26Z" fill="#a8301c" opacity=".8" filter="url(#b2)"/>
<path d="M50 20 L44 30 L54 38 L56 46 L70 54 L98 60" stroke="#e85a1e" stroke-width="2.600" fill="none" filter="url(#b1)"/>
<path d="M0 34 L40 50 L98 60 V68 H0Z" fill="#59451f" filter="url(#b2)"/>
<path d="M40 47 L98 58" stroke="#8e3a20" stroke-width="3" filter="url(#b1)"/>
<path d="M10 54 L70 59 L98 65 V69 H14Z" fill="#37451d" filter="url(#b2)"/>
<path d="M0 6 H9 L16 38 L10 91 H0Z" fill="#1b1a20" filter="url(#b2)"/>
<path d="M18 66 L98 63 V91 H26Z" fill="#4976ae" filter="url(#b1)"/>
<path d="M20 67 L56 63 L98 65 V69 L60 71 L38 75Z" fill="#e2ebf6" filter="url(#b1)"/>
<path d="M30 76 L60 74 L98 78 L98 82 L62 80Z" fill="#2e4f80" filter="url(#b2)"/>
<path d="M46 84 L72 78 L98 82 V88 L70 89Z" fill="#dde7f4" filter="url(#b1)"/>
<path d="M0 70 L20 70 L34 78 L50 91 H0Z" fill="#141318" filter="url(#b1)"/>
<ellipse cx="70" cy="86" rx="12" ry="3.600" fill="#22222a" filter="url(#b1)"/>
</g></svg>
<!-- img2 winter lake -->
<svg style="left:686px;top:350.7px" width="83" height="92" viewBox="0 0 83 92"><defs><clipPath id="c2"><rect width="83" height="92"/></clipPath><linearGradient id="p2" x1="0" x2="0" y1="0" y2="1"><stop offset="0" stop-color="#050d22"/><stop offset=".3" stop-color="#10264a"/><stop offset=".5" stop-color="#9bb8d2"/><stop offset=".62" stop-color="#5a9acb"/><stop offset=".8" stop-color="#2d7fbd"/><stop offset="1" stop-color="#9db8cf"/></linearGradient></defs>
<g clip-path="url(#c2)"><rect width="83" height="92" fill="url(#p2)"/>
<path d="M0 8 C8 8 14 18 20 26 C28 30 32 16 42 14 C54 18 60 28 70 34 L83 40 V56 H0Z" fill="#bfd9ec" filter="url(#b2)"/>
<path d="M4 14 C10 12 14 20 16 24 L6 26Z" fill="#eaf4fb" filter="url(#b1)"/><path d="M36 18 C44 14 52 20 58 28 L40 30Z" fill="#e6f2fa" filter="url(#b2)"/>
<path d="M0 38 C10 30 20 42 30 36 C42 44 52 36 62 44 L83 44 V54 H0Z" fill="#8ea9c6" filter="url(#b2)" opacity=".85"/>
<path d="M0 40 C6 38 10 44 14 42 L14 52 H0Z" fill="#5a7290" filter="url(#b2)" opacity=".7"/>
<path d="M0 50 H83 V57 H0Z" fill="#e1ecf5" filter="url(#b1)"/>
<path d="M10 62 C30 55 60 55 83 57 V84 H0 V70Z" fill="#3a8ac8" filter="url(#b2)"/>
<ellipse cx="58" cy="69" rx="19" ry="5.600" fill="#1c7acc" filter="url(#b2)"/>
<path d="M0 58 L22 56 L6 70 L0 72Z" fill="#c4dcec" filter="url(#b1)"/>
<path d="M0 72 C20 66 40 74 60 78 L0 82Z" fill="#7fb0d6" filter="url(#b2)"/>
<path d="M0 86 C20 79 60 81 83 85 V92 H0Z" fill="#a9c2d8" filter="url(#b2)"/>
<path d="M20 88 C40 84 60 86 83 90 V92 H20Z" fill="#dfe9f2" filter="url(#b1)"/>
</g></svg>
<!-- img3 geyser -->
<svg style="left:773.6px;top:350.7px" width="112" height="92" viewBox="0 0 112 92"><defs><clipPath id="c3"><rect width="112" height="92"/></clipPath><linearGradient id="p3" x1="0" x2="1" y1="0" y2="1"><stop offset="0" stop-color="#3d6ea6"/><stop offset=".3" stop-color="#6b6a62"/><stop offset=".6" stop-color="#6a5238"/><stop offset="1" stop-color="#4b3a2c"/></linearGradient></defs>
<g clip-path="url(#c3)"><rect width="112" height="92" fill="url(#p3)"/>
<path d="M0 30 C6 16 22 10 30 20 C38 30 40 50 36 60 L0 60Z" fill="#5d5240" filter="url(#b2)"/>
<path d="M60 0 H112 V60 L92 74 C84 60 70 40 56 30Z" fill="#c9c7c5" filter="url(#b3)"/>
<path d="M76 0 H112 V30 C100 26 86 14 76 0Z" fill="#e4e3e2" filter="url(#b3)"/>
<path d="M36 30 C44 24 56 30 60 44 C58 56 44 60 36 56Z" fill="#6b645b" filter="url(#b3)"/>
<path d="M48 40 L70 34 L84 50 L78 72 L50 70Z" fill="#5a4526" filter="url(#b2)"/>
<path d="M0 56 L36 50 L48 60 L0 66Z" fill="#8a7a58" filter="url(#b2)"/>
<path d="M0 68 C20 60 44 62 70 70 L88 78 L84 92 H0Z" fill="#a4551f" filter="url(#b2)"/>
<ellipse cx="22" cy="76" rx="14" ry="6" fill="#dd8a4a" filter="url(#b2)"/>
<ellipse cx="68" cy="84" rx="8" ry="5" fill="#e8932e" filter="url(#b2)"/>
<path d="M84 74 L104 40 L108 44 L90 80Z" fill="#d8d8da" filter="url(#b2)"/>
<path d="M88 80 L112 70 V92 H84Z" fill="#4a463f" filter="url(#b2)"/>
</g></svg>
<!-- img4 blue bacteria -->
<svg style="left:890px;top:350.7px" width="128" height="90.3" viewBox="0 0 128 90.3"><defs><clipPath id="c4"><rect width="128" height="90.3"/></clipPath><linearGradient id="p4" x1="0" x2="1" y1="0" y2="1"><stop offset="0" stop-color="#33281a"/><stop offset=".4" stop-color="#5c4a22"/><stop offset=".7" stop-color="#4c3a1e"/><stop offset="1" stop-color="#5e5a30"/></linearGradient></defs>
<g clip-path="url(#c4)"><rect width="128" height="90.3" fill="url(#p4)"/>
<path d="M0 40 C20 50 40 70 60 80 L70 90 H0Z" fill="#4a2f22" filter="url(#b3)"/>
<path d="M40 0 H100 C96 20 84 28 60 26Z" fill="#6b5a28" filter="url(#b3)"/>
<g filter="url(#b1)"><rect x="10" y="6" width="36" height="14" rx="7" transform="rotate(24 28 13)" fill="#5a5cc0"/>
<rect x="60" y="14" width="40" height="14" rx="7" transform="rotate(-22 80 21)" fill="#6669cc"/>
<rect x="90" y="34" width="26" height="9" rx="4.5" transform="rotate(12 103 38)" fill="#5a5fb0"/>
<rect x="28" y="42" width="62" height="26" rx="13" transform="rotate(20 59 55)" fill="#5d59c9"/>
<rect x="36" y="46" width="44" height="10" rx="5" transform="rotate(20 58 51)" fill="#8b8ae6"/>
<rect x="90" y="62" width="32" height="16" rx="8" transform="rotate(-48 106 70)" fill="#6f70d6"/>
<ellipse cx="12" cy="74" rx="16" ry="18" fill="#6a66d0"/><ellipse cx="8" cy="66" rx="9" ry="8" fill="#8d8ce8"/></g>
<path d="M118 0 V90" stroke="#9aa07a" stroke-width="3" stroke-dasharray="1.5 3" opacity=".6"/>
</g></svg>
<!-- img5 green cocci -->
<svg style="left:1018px;top:350.7px" width="129" height="90.3" viewBox="0 0 129 90.3"><defs><clipPath id="c5"><rect width="129" height="90.3"/></clipPath><radialGradient id="p5" cx=".55" cy=".55" r=".75"><stop offset="0" stop-color="#e8434a"/><stop offset=".5" stop-color="#ee6a5a"/><stop offset="1" stop-color="#f0a07c"/></radialGradient></defs>
<g clip-path="url(#c5)"><rect width="129" height="90.3" fill="url(#p5)"/>
<ellipse cx="22" cy="66" rx="20" ry="22" fill="#f6c08a" filter="url(#b6)"/>
<ellipse cx="30" cy="16" rx="24" ry="12" fill="#f4a080" filter="url(#b6)"/>
<ellipse cx="116" cy="60" rx="14" ry="26" fill="#f08a6a" filter="url(#b6)"/>
<g filter="url(#b1)" fill="#1e9448" stroke="#9fe0a0" stroke-width="1">
<ellipse cx="77" cy="16" rx="7" ry="11" transform="rotate(4 77 16)"/>
<ellipse cx="104" cy="20" rx="7" ry="11" transform="rotate(48 104 20)"/>
<ellipse cx="44" cy="36" rx="7.4" ry="12.4" transform="rotate(2 44 36)"/>
<ellipse cx="70" cy="42" rx="7.4" ry="13" transform="rotate(-28 70 42)"/>
<ellipse cx="23" cy="46" rx="8" ry="7"/>
<ellipse cx="53" cy="58" rx="6.6" ry="10" transform="rotate(-30 53 58)"/>
<ellipse cx="95" cy="55" rx="7.4" ry="12.4" transform="rotate(36 95 55)"/>
<ellipse cx="28" cy="72" rx="11.4" ry="6.4" transform="rotate(22 28 72)"/>
<ellipse cx="76" cy="77" rx="12" ry="6.6" transform="rotate(12 76 77)"/>
</g></g></svg>
<!-- img9 pink tissue -->
<svg style="left:890px;top:441px" width="128" height="81.7" viewBox="0 0 128 81.7"><defs><clipPath id="c9"><rect width="128" height="81.7"/></clipPath><linearGradient id="p9" x1="0" x2="0" y1="0" y2="1"><stop offset="0" stop-color="#a23a4a"/><stop offset=".4" stop-color="#b8405a"/><stop offset="1" stop-color="#d85a7c"/></linearGradient></defs>
<g clip-path="url(#c9)"><rect width="128" height="81.7" fill="url(#p9)"/>
<g filter="url(#b2)">
<path d="M0 12 C20 6 40 16 64 10 C90 6 110 14 128 10 V18 C100 22 80 14 60 20 C40 24 20 16 0 22Z" fill="#7c2238"/>
<path d="M0 30 C24 22 44 34 70 26 C96 22 112 32 128 28 V36 C104 40 84 32 62 38 C40 42 20 34 0 40Z" fill="#e07a8e"/>
<path d="M0 42 C24 36 44 48 70 40 C96 36 112 46 128 42 V50 C104 54 84 46 62 52 C40 56 20 48 0 54Z" fill="#8a2440"/>
<path d="M0 58 C24 50 48 62 74 54 C100 50 114 60 128 56 V66 C104 70 84 62 62 68 C40 72 20 64 0 70Z" fill="#f09ab0"/>
<path d="M20 72 C40 66 60 76 84 70 C100 68 116 74 128 72 V81.7 H20Z" fill="#c23a5e"/>
<path d="M0 66 L22 60 L16 81.7 H0Z" fill="#f2c2cc"/>
</g>
<g filter="url(#b1)" fill="#8aa834"><ellipse cx="10" cy="62" rx="7" ry="3"/><ellipse cx="58" cy="42" rx="6" ry="2.4"/><ellipse cx="104" cy="54" rx="6" ry="2.4"/><ellipse cx="84" cy="64" rx="5" ry="2"/></g>
</g></svg>
<!-- img10 purple cocci -->
<svg style="left:1018px;top:441px" width="129" height="81.7" viewBox="0 0 129 81.7"><defs><clipPath id="c10"><rect width="129" height="81.7"/></clipPath><linearGradient id="p10" x1="0" x2="1" y1="0" y2="0"><stop offset="0" stop-color="#8e3384"/><stop offset=".5" stop-color="#a44aa6"/><stop offset=".85" stop-color="#b8408c"/><stop offset="1" stop-color="#a8183a"/></linearGradient></defs>
<g clip-path="url(#c10)"><rect width="129" height="81.7" fill="url(#p10)"/>
<ellipse cx="26" cy="36" rx="16" ry="14" fill="#5a1448" filter="url(#b3)"/>
<ellipse cx="40" cy="8" rx="8" ry="8" fill="#3a0c30" filter="url(#b2)"/>
<ellipse cx="100" cy="50" rx="22" ry="20" fill="#c878c8" filter="url(#b6)"/>
<g filter="url(#b1)">
<path d="M6 6 C2 30 10 50 30 54" fill="none" stroke="#c9a0e0" stroke-width="6" stroke-dasharray="5 1.5"/>
<path d="M30 54 C50 50 70 40 96 12" fill="none" stroke="#d8b0e6" stroke-width="4" stroke-dasharray="3.4 1.2"/>
<path d="M14 4 C24 10 30 6 34 14" fill="none" stroke="#c090d8" stroke-width="6" stroke-dasharray="5 1.5"/>
<path d="M84 10 C88 30 96 40 116 46" fill="none" stroke="#caa0e0" stroke-width="6" stroke-dasharray="5 1.5"/>
<path d="M10 66 C24 78 40 70 52 78" fill="none" stroke="#c79ae0" stroke-width="6" stroke-dasharray="5 1.5"/>
<path d="M76 56 C84 66 96 72 104 70" fill="none" stroke="#d4a8e4" stroke-width="4.4" stroke-dasharray="3.6 1.2"/>
<circle cx="62" cy="10" r="12.4" fill="#e0b4dc"/><circle cx="59" cy="8" r="7" fill="#f0d4ea"/>
<circle cx="50" cy="30" r="10.4" fill="#b77ad2"/><circle cx="48" cy="28" r="5.6" fill="#d9b4e8"/>
<circle cx="70" cy="58" r="8" fill="#b784d8"/><circle cx="70" cy="70" r="8" fill="#a972d0"/>
<circle cx="116" cy="60" r="7" fill="#d9b0e4"/><circle cx="122" cy="76" r="8" fill="#f0dce8"/>
</g></g></svg>
<!-- img6 iceberg -->
<svg style="left:579.2px;top:457.6px" width="96.8" height="65.1" viewBox="0 0 96.8 65.1"><defs><clipPath id="c6"><rect width="96.8" height="65.1"/></clipPath><linearGradient id="p6" x1="0" x2="0" y1="0" y2="1"><stop offset="0" stop-color="#7d8798"/><stop offset=".36" stop-color="#a9b5c4"/><stop offset=".44" stop-color="#6c8fb2"/><stop offset=".56" stop-color="#a8c4da"/><stop offset="1" stop-color="#c7dcea"/></linearGradient></defs>
<g clip-path="url(#c6)"><rect width="96.8" height="65.1" fill="url(#p6)"/>
<path d="M0 0 H8 L14 20 L22 34 L30 44 L20 65.1 H0Z" fill="#cfe0ee" filter="url(#b1)"/>
<path d="M4 40 L40 34 L70 44 L96.8 38 V65.1 H4Z" fill="#d6e6f2" filter="url(#b2)"/>
<path d="M20 50 L50 44 L60 56 L90 50 L96.8 65.1 H24Z" fill="#9fbcd6" filter="url(#b2)"/>
<path d="M66 30 L76 24 L84 34 L96.8 30 V42 L66 42Z" fill="#c3d8e8" filter="url(#b1)"/>
<ellipse cx="66" cy="40" rx="3" ry="5" fill="#2a303a" filter="url(#b1)"/>
<path d="M30 26 H52 L50 29 H32Z" fill="#5a6a7c" filter="url(#b1)"/>
</g></svg>
<!-- img7 ocean -->
<svg style="left:681.2px;top:457.6px" width="96.8" height="65.1" viewBox="0 0 96.8 65.1"><defs><clipPath id="c7"><rect width="96.8" height="65.1"/></clipPath><radialGradient id="p7" cx=".56" cy="0" r="1.05"><stop offset="0" stop-color="#d8f4ff"/><stop offset=".12" stop-color="#4fc0f0"/><stop offset=".4" stop-color="#1476d0"/><stop offset=".75" stop-color="#0a4ea8"/><stop offset="1" stop-color="#083c88"/></radialGradient></defs>
<g clip-path="url(#c7)"><rect width="96.8" height="65.1" fill="url(#p7)"/>
<path d="M60 65.1 C70 56 86 54 96.8 46 V65.1Z" fill="#1f6f8e" filter="url(#b2)"/>
<path d="M0 0 H30 C20 4 8 6 0 10Z" fill="#2a9fe0" filter="url(#b2)"/>
</g></svg>
<!-- img8 salt shore -->
<svg style="left:783.2px;top:457.6px" width="102" height="65.1" viewBox="0 0 102 65.1"><defs><clipPath id="c8"><rect width="102" height="65.1"/></clipPath><linearGradient id="p8" x1="0" x2="0" y1="0" y2="1"><stop offset="0" stop-color="#8f8e74"/><stop offset=".2" stop-color="#b9aa86"/><stop offset=".34" stop-color="#d9c9a4"/><stop offset=".4" stop-color="#a9c4a4"/><stop offset=".6" stop-color="#5fa67a"/><stop offset=".72" stop-color="#b9c8b4"/><stop offset="1" stop-color="#dcdcd8"/></linearGradient></defs>
<g clip-path="url(#c8)"><rect width="102" height="65.1" fill="url(#p8)"/>
<ellipse cx="22" cy="8" rx="24" ry="6" fill="#d2b088" filter="url(#b3)"/>
<ellipse cx="74" cy="10" rx="14" ry="8" fill="#e8d4b0" filter="url(#b3)"/>
<ellipse cx="50" cy="4" rx="20" ry="4" fill="#6f7a68" filter="url(#b3)"/>
<ellipse cx="70" cy="28" rx="22" ry="3" fill="#f0ead0" filter="url(#b2)"/>
<path d="M0 44 C30 38 60 46 102 52 V65.1 H0Z" fill="#deded9" filter="url(#b2)"/>
<path d="M0 54 C30 50 60 58 102 60 V65.1 H0Z" fill="#c2c4c0" filter="url(#b2)"/>
<path d="M60 38 C76 36 90 40 102 44 V52 C90 48 76 44 60 44Z" fill="#4f9a62" filter="url(#b2)"/>
</g></svg>
<!-- status bar -->
<div class="abs" style="left:0;top:682px;width:1276px;height:14px;background:#f3f2f1;border-top:1px solid #d6d5d5"></div>
<div class="t" style="left:8px;top:686.6px;font-size:7.3px;letter-spacing:-.1px">Слайд 3 з 31</div>
<div class="t" style="left:71.4px;top:686.6px;font-size:7.6px">українська</div>
<svg style="left:121px;top:684px" width="10" height="10" viewBox="0 0 10 10" fill="none" stroke="#444" stroke-width=".8"><circle cx="3.6" cy="1.8" r="1.2"/><path d="M.8 3.8 H6.4 M3.6 3.8 V6.2 L1.8 9.4 M3.6 6.2 L5 9.4"/><path d="M6 7 L7.4 8.6 L9.6 5.4"/></svg>
<div class="t" style="left:133px;top:686.6px;font-size:7.6px;letter-spacing:.02px">Спеціальні можливості: усе добре</div>
<svg style="left:980.6px;top:684.6px" width="11" height="9" viewBox="0 0 11 9" fill="none" stroke="#444" stroke-width=".8"><path d="M.4 4 H10.6 M.4 6.2 H10.6 M.4 8.4 H10.6 M4 2.2 L5.5 .6 L7 2.2"/></svg>
<div class="t" style="left:992.4px;top:686.6px;font-size:7.6px">Нотатки</div>
<div class="abs" style="left:1034.6px;top:682px;width:25px;height:14px;background:#dcdbda"></div>
<svg style="left:1042.4px;top:684.6px" width="10" height="9" viewBox="0 0 10 9" fill="none" stroke="#333" stroke-width=".8"><rect x=".5" y=".5" width="9" height="8"/><path d="M.5 6.4 H9.5 M3 .5 V6.4"/></svg>
<svg style="left:1069px;top:684.6px" width="10" height="9" viewBox="0 0 10 9" fill="none" stroke="#444" stroke-width=".8"><rect x=".5" y=".8" width="3.6" height="2.8"/><rect x="5.9" y=".8" width="3.6" height="2.8"/><rect x=".5" y="5.4" width="3.6" height="2.8"/><rect x="5.9" y="5.4" width="3.6" height="2.8"/></svg>
<svg style="left:1095px;top:684.6px" width="10" height="9" viewBox="0 0 10 9" fill="none" stroke="#444" stroke-width=".8"><path d="M5 1.4 V8.2 M5 1.4 C3.6 .4 2 .4 .6 1 V8 C2 7.4 3.6 7.4 5 8.2 C6.4 7.4 8 7.4 9.4 8 V1 C8 .4 6.4 .4 5 1.4Z"/></svg>
<svg style="left:1121.4px;top:685.2px" width="10" height="10" viewBox="0 0 10 10" fill="none" stroke="#444" stroke-width=".8"><path d="M.4 .8 H9.6 M1.2 .8 V5.6 H8.8 V.8 M5 5.6 V8.8 M3 9.2 H7"/></svg>
<div class="abs" style="left:1144px;top:688.6px;width:5px;height:.9px;background:#444"></div>
<div class="abs" style="left:1153px;top:688.7px;width:65px;height:1px;background:#bcbcbc"></div>
<div class="abs" style="left:1186.2px;top:684.2px;width:3.2px;height:9.6px;border-radius:1px;background:#6f6f6f"></div>
<div class="abs" style="left:1222.6px;top:688.6px;width:5px;height:.9px;background:#444"></div><div class="abs" style="left:1224.65px;top:686.5px;width:.9px;height:5px;background:#444"></div>
<div class="t" style="left:1237px;top:685.7px;font-size:7.2px;letter-spacing:-.25px">113%</div>
<svg style="left:1262px;top:684.2px" width="10" height="10" viewBox="0 0 10 10" fill="none" stroke="#444" stroke-width=".8"><rect x="2.6" y="2.6" width="4.8" height="4.8"/><path d="M5 .4 V2.4 M5 7.6 V9.6 M.4 5 H2.4 M7.6 5 H9.6"/></svg>
</div><!-- /pp -->
<!-- ===== Zoom bottom toolbar ===== -->
<div class="abs" style="left:0;top:920px;width:1920px;height:88px;background:#000"></div>
<style>.tb{position:absolute;top:981.8px;font-size:17px;font-weight:700;line-height:1;white-space:nowrap;color:#fff;transform:translateX(-50%);-webkit-text-stroke:.4px #000}</style>
<svg width="0" height="0" style="left:0;top:0"><defs><symbol id="chv" viewBox="0 0 12 8"><path d="M1.3 6.6 L6 1.6 L10.7 6.6" fill="none" stroke="#fff" stroke-width="2" stroke-linecap="round" stroke-linejoin="round"/></symbol></defs></svg>
<!-- mic muted -->
<svg style="left:58px;top:932px" width="42" height="44" viewBox="0 0 42 44" fill="none" stroke="#fff" stroke-width="1.8" stroke-linecap="round"><rect x="14.4" y="4.4" width="12.4" height="23.6" rx="6.2"/><path d="M9.6 20.6 V22 C9.6 28 14.6 32.2 20.6 32.2 C26.6 32.2 31.6 28 31.6 22 V20.6"/><path d="M20.6 32.4 V39 M14 39.3 H27.2"/><path d="M4.6 38.2 L36 6" stroke="#000" stroke-width="6"/><path d="M4.6 38.2 L36 6" stroke="#f0275b" stroke-width="3.2"/></svg>
<div class="tb" style="left:78px">Звук</div>
<svg style="left:120px;top:950px" width="12" height="8"><use href="#chv"/></svg>
<!-- video -->
<svg style="left:198px;top:942px" width="38" height="24" viewBox="0 0 38 24" fill="none" stroke="#fff" stroke-width="1.9" stroke-linejoin="round"><rect x="1.6" y="2" width="24.2" height="20.4" rx="5"/><path d="M28.4 11.4 L36.2 4.4 V20.6 L28.4 13.6Z"/></svg>
<div class="tb" style="left:217.6px">Видео</div>
<svg style="left:267.4px;top:950px" width="12" height="8"><use href="#chv"/></svg>
<!-- chat -->
<svg style="left:563px;top:936px" width="37" height="36" viewBox="0 0 37 36" fill="none" stroke="#fff" stroke-width="1.8" stroke-linejoin="round" stroke-linecap="round"><path d="M11 9.4 C11 4.4 13.6 2.4 18 2.4 H28 C32.4 2.4 34.8 4.6 34.8 9 V13 C34.8 17 33 19 29 19.6"/><path d="M8.6 9.4 H21.6 C25.8 9.4 28 11.6 28 15.8 V23 C28 27.2 25.8 29.6 21.6 29.6 H15 L8.4 33.4 L9.6 29.4 C4.6 29 2.6 26.8 2.6 23 V15.8 C2.6 11.6 4.6 9.4 8.6 9.4Z"/><circle cx="8.8" cy="19.6" r="1.5" fill="#fff" stroke="none"/><circle cx="15.2" cy="19.6" r="1.5" fill="#fff" stroke="none"/><circle cx="21.6" cy="19.6" r="1.5" fill="#fff" stroke="none"/></svg>
<div class="tb" style="left:582.8px">Чат</div>
<svg style="left:626.4px;top:949px" width="12" height="8"><use href="#chv"/></svg>
<!-- participants -->
<svg style="left:731px;top:940px" width="32" height="30" viewBox="0 0 32 30" fill="none" stroke="#fff" stroke-width="1.9" stroke-linecap="round"><circle cx="10.8" cy="6.4" r="3.9"/><path d="M11.6 26.6 H7 C4.2 26.6 2.6 25 2.6 22.6 C2.6 18.4 5.6 15.4 10 15.4 C11.4 15.4 12.4 15.6 13.6 16.2"/><circle cx="21.6" cy="11.8" r="3.7"/><rect x="14.2" y="19.6" width="15" height="7.4" rx="3.7"/></svg>
<div class="t" style="left:772.4px;top:944.4px;font-size:17.5px;color:#b9b3b2;letter-spacing:-.3px">32</div>
<div class="tb" style="left:747px">Участники</div>
<svg style="left:821px;top:949px" width="12" height="8"><use href="#chv"/></svg>
<!-- react -->
<svg style="left:901px;top:936px" width="40" height="36" viewBox="0 0 40 36" fill="none" stroke="#fff" stroke-width="1.9" stroke-linejoin="round"><path d="M14.8 33 C9 26 4.4 19 3 13.4 C1.6 7.6 5.6 3.2 10.6 3.4 C14 3.6 16.8 6 18.6 9.4 C21.6 6.4 25.6 5 29.8 6.4 C35.2 8.2 38 13.8 35.6 19 C33.4 23.8 24 29.4 14.8 33Z"/></svg>
<div class="tb" style="left:921.4px">Отреагировать</div>
<svg style="left:974px;top:949px" width="12" height="8"><use href="#chv"/></svg>
<!-- share -->
<div class="abs" style="left:1053px;top:939.4px;width:36.4px;height:29px;border-radius:5.5px;background:#1be283"></div>
<svg style="left:1053px;top:939.4px" width="36.4" height="29" viewBox="0 0 36.4 29" fill="none" stroke="#000" stroke-width="3.2" stroke-linecap="round" stroke-linejoin="round"><path d="M18.2 22.4 V8 M11.6 13.4 L18.2 6.8 L24.8 13.4"/></svg>
<div class="tb" style="left:1071.2px">Поделиться</div>
<!-- apps -->
<svg style="left:1196px;top:937px" width="34" height="34" viewBox="0 0 34 34" fill="none" stroke="#fff" stroke-width="1.9" stroke-linecap="round"><path d="M2.4 14.6 V9 C2.4 4.6 4.8 2.2 9.2 2.2 H13.4"/><circle cx="26.4" cy="8" r="5.3"/><circle cx="7.8" cy="25.8" r="5.3"/><path d="M31.4 19.2 V24.8 C31.4 29.2 29 31.6 24.6 31.6 H20.4"/></svg>
<div class="tb" style="left:1212.8px;letter-spacing:.45px">Приложения</div>
<!-- record -->
<svg style="left:1323px;top:936px" width="36" height="36" viewBox="0 0 36 36"><circle cx="17.8" cy="18" r="15.2" fill="none" stroke="#fff" stroke-width="1.9"/><circle cx="17.8" cy="18" r="6.8" fill="#fff"/></svg>
<div class="tb" style="left:1340px;letter-spacing:-.3px">Запись</div>
<!-- more -->
<svg style="left:1464px;top:935px" width="38" height="38" viewBox="0 0 38 38"><circle cx="18.9" cy="19" r="16.8" fill="none" stroke="#fff" stroke-width="1.9"/><circle cx="9" cy="19" r="2" fill="#fff"/><circle cx="18.9" cy="19" r="2" fill="#fff"/><circle cx="28.8" cy="19" r="2" fill="#fff"/></svg>
<div class="tb" style="left:1482.8px;letter-spacing:.25px">Дополнительно</div>
<!-- leave -->
<svg style="left:1829px;top:934px" width="40" height="40" viewBox="0 0 40 40" fill="none" stroke-linejoin="round" stroke-linecap="round"><path d="M15.4 2.8 H36.4 M36.4 2.8 L26.4 9.4 V36 L36.4 30.2 Z" stroke="#f01d63" stroke-width="2"/><circle cx="14.8" cy="10.2" r="4.4" stroke="#fff" stroke-width="1.8"/><path d="M11 16.4 C13.4 15 16.4 15.2 18.4 17.2 L22.4 21.6 C23.4 22.8 22 24.6 20.6 23.6 L17.8 21.4 L17.2 25.4 L19.4 34.6 C19.8 37 16.6 37.8 15.8 35.6 L13.4 28.6 L8.8 35.8 C7.4 37.8 4.4 36 5.6 33.8 L9.6 26.4 L9.8 21 L7 23.4 C5.6 24.6 3.6 23 4.8 21.4 Z" stroke="#fff" stroke-width="1.7"/></svg>
<div class="tb" style="left:1847.6px;letter-spacing:-.3px">Выйти</div>
<div class="abs" style="left:671px;top:1007px;width:683px;height:1.2px;background:#f2f2f2"></div>
<!-- ===== Windows taskbar ===== -->
<div class="abs" style="left:0;top:1008px;width:1920px;height:72px;background:linear-gradient(90deg,#e9ebee 0,#e8ebeb 40%,#e7ecd9 46%,#e6eec4 50%,#e6eec6 56%,#e7ebdc 62%,#e7e9e4 70%,#e6e8e2 100%)"></div>
<!-- start -->
<svg style="left:524.6px;top:1027.4px" width="35" height="35" viewBox="0 0 35 35"><defs><linearGradient id="wg" x1="0" y1="0" x2="1" y2="1"><stop offset="0" stop-color="#55c8f8"/><stop offset=".5" stop-color="#1f9be6"/><stop offset="1" stop-color="#0a72cf"/></linearGradient></defs><path d="M0 1.5 Q0 0 1.5 0 H16.6 V16.6 H0Z M18.2 0 H33.3 Q34.8 0 34.8 1.5 V16.6 H18.2Z M0 18.2 H16.6 V34.8 H1.5 Q0 34.8 0 33.3Z M18.2 18.2 H34.8 V33.3 Q34.8 34.8 33.3 34.8 H18.2Z" fill="url(#wg)"/></svg>
<!-- search pill -->
<div class="abs" style="left:581.4px;top:1020.6px;width:327.4px;height:46px;border-radius:23px;background:linear-gradient(90deg,#f6f8f9 0,#f5f7f7 70%,#f2f5ec 100%);box-shadow:0 0 0 1px rgba(0,0,0,.06),0 1.5px 2px rgba(0,0,0,.22)"></div>
<svg style="left:596px;top:1032px" width="28" height="28" viewBox="0 0 28 28" fill="none" stroke="#252525" stroke-width="2.4" stroke-linecap="round"><circle cx="10.6" cy="10.6" r="7.4"/><path d="M16 16.2 L22.8 23"/></svg>
<div class="t" style="left:636.6px;top:1034.2px;font-size:20.6px;color:#565656;letter-spacing:.35px">Поиск</div>
<!-- castle -->
<svg style="left:835px;top:1028px" width="72" height="38" viewBox="0 0 72 38"><ellipse cx="36" cy="32" rx="35" ry="5" fill="#aebb58"/><ellipse cx="30" cy="33.4" rx="22" ry="2.6" fill="#c8c86a"/>
<path d="M10 30 V12 L22 6 L30 10 V30Z" fill="#d9a674"/><path d="M22 6 L30 10 V30 H22Z" fill="#c48a58"/>
<rect x="20" y="2" width="9" height="28" rx="2" fill="#e0ad7a"/><rect x="20" y="2" width="9" height="3" fill="#b5744a"/>
<path d="M30 12 H56 V30 H30Z" fill="#cf9a68"/><rect x="34" y="6" width="6" height="24" rx="1.6" fill="#deb080"/><rect x="44" y="8" width="6" height="22" rx="1.6" fill="#d8a878"/><rect x="52" y="12" width="5" height="18" rx="1.4" fill="#c89060"/>
<path d="M56 20 L68 16 V30 H56Z" fill="#c88c5c"/><rect x="63" y="12" width="5" height="18" rx="1.4" fill="#d8a474"/><rect x="57" y="22" width="5" height="8" fill="#8a5a40"/>
<circle cx="24.5" cy="2" r="1.6" fill="#7aa0b8"/><circle cx="47" cy="7.4" r="1.6" fill="#7aa0b8"/><path d="M10 18 H56" stroke="#b5744a" stroke-width="1"/></svg>
<!-- edge -->
<svg style="left:927.4px;top:1025.6px" width="37" height="37" viewBox="0 0 37 37"><defs><linearGradient id="eg1" x1="0" y1="0" x2=".6" y2="1"><stop offset="0" stop-color="#2f9fe4"/><stop offset="1" stop-color="#1450a6"/></linearGradient><linearGradient id="eg2" x1="0" y1=".3" x2="1" y2=".5"><stop offset="0" stop-color="#2e9fe2"/><stop offset=".45" stop-color="#35b8c8"/><stop offset=".75" stop-color="#4cc97a"/><stop offset="1" stop-color="#74d85e"/></linearGradient></defs>
<circle cx="18.500" cy="18.500" r="18" fill="url(#eg1)"/>
<path d="M9 3.200 C16 -1 27 -.6 32.600 6 C36 10 37.400 17 36 23.400 L24 23.400 C25 16.500 21.500 12 16 12 C10.500 12 6.500 14.500 3.600 19 C3.600 12.500 5.500 7 9 3.200Z" fill="url(#eg2)"/>
<path d="M.8 21 C3 30.500 10 36.500 19 36.500 C26.500 36.500 32.500 32.500 35.200 26.600 L23 26.600 C16.500 28.500 11 25.500 11 19.500 C11 16.500 12.200 14 14.500 12.200 C7.500 12.600 2.500 16.500 .8 21Z" fill="#1756a6"/>
<path d="M13.400 20.400 A5.400 5.400 0 0 1 24.100 20.400 L24 23.400 L36 23.400 C35.800 24.600 35.500 25.700 35.100 26.700 L22.600 26.700 C17.400 27.800 13.400 25 13.400 20.400Z" fill="#e7eecb"/>
</svg>
<!-- store -->
<svg style="left:994px;top:1026.6px" width="36" height="36" viewBox="0 0 36 36"><path d="M10.6 8 V3.6 Q10.6 1 13.2 1 H22.8 Q25.4 1 25.4 3.6 V8" fill="none" stroke="#35b6ea" stroke-width="2"/><path d="M0 5 H35.4 V30 Q35.4 35.2 30.2 35.2 H5.2 Q0 35.2 0 30Z" fill="#114f8d"/><path d="M0 5 H35.4 V12 H0Z" fill="#15569a"/><rect x="10" y="12.6" width="7" height="7" fill="#f25022"/><rect x="18.2" y="12.6" width="7" height="7" fill="#7fba00"/><rect x="10" y="20.8" width="7" height="7" fill="#1aa3ef"/><rect x="18.2" y="20.8" width="7" height="7" fill="#ffb900"/></svg>
<!-- explorer -->
<svg style="left:1059.6px;top:1027.6px" width="37" height="33" viewBox="0 0 37 33"><path d="M0 2.4 Q0 .4 2 .4 H11.6 L14.6 3.4 H0Z" fill="#e8a818"/><path d="M0 3.2 H34.6 Q36.6 3.2 36.6 5.2 V30.4 Q36.6 32.4 34.6 32.4 H2 Q0 32.4 0 30.4Z" fill="#fbc935"/><path d="M0 10 H36.6 V30.4 Q36.6 32.4 34.6 32.4 H2 Q0 32.4 0 30.4Z" fill="#fdd24a"/><path d="M6.4 32.4 V25.8 Q6.4 22.6 9.6 22.6 H26.8 Q30 22.6 30 25.8 V32.4Z" fill="#1687d9"/><rect x="11" y="26.6" width="14.6" height="1.8" rx=".9" fill="#0a5fa8"/></svg>
<div class="abs" style="left:1074px;top:1068.6px;width:9px;height:3.8px;border-radius:2px;background:#8b8d86"></div>
<!-- copilot -->
<svg style="left:1126px;top:1026.6px" width="37" height="34" viewBox="0 0 37 34"><defs><linearGradient id="cg1" x1="0" y1="0" x2="0" y2="1"><stop offset="0" stop-color="#2a8fe8"/><stop offset=".45" stop-color="#2fc79a"/><stop offset=".8" stop-color="#f0d21c"/><stop offset="1" stop-color="#f08a2a"/></linearGradient><linearGradient id="cg2" x1="0" y1="0" x2="1" y2="1"><stop offset="0" stop-color="#b45cf0"/><stop offset=".5" stop-color="#f062a8"/><stop offset="1" stop-color="#f89a4a"/></linearGradient></defs>
<path d="M11 2 C13 .4 15 0 18 0 H24 C27 0 28.6 2 29.4 5 L31 11 H22 L20 6 C19.4 4.4 18 4 16.4 4 C14 4 13 5.6 12.4 8 L8.4 23 C7.8 25.4 6.4 26.6 4 26.6 C1 26.6 -.4 24 .4 21 L4.6 7.4 C5.6 4.4 8 3 11 2Z" fill="url(#cg1)"/>
<path d="M18 0 H24 C27 0 28.6 2 29.4 5 L31 11 H25 C23 11 22 9.6 21.4 8 L20 4 C19.6 2 19 .6 18 0Z" fill="#1f5fd0"/>
<path d="M26 32 C24 33.6 22 34 19 34 H13 C10 34 8.400 32 7.600 29 L6 23 H15 L17 28 C17.6 29.600 19 30 20.600 30 C23 30 24 28.400 24.600 26 L28.600 11 C29.200 8.600 30.600 7.400 33 7.400 C36 7.400 37.400 10 36.600 13 L32.400 26.600 C31.400 29.600 29 31 26 32Z" fill="url(#cg2)"/>
</svg>
<!-- zoom (active) -->
<div class="abs" style="left:1182px;top:1016px;width:56px;height:56.4px;border-radius:5px;background:#f3f4f4;box-shadow:0 0 0 1px rgba(0,0,0,.05)"></div>
<div class="abs" style="left:1191.6px;top:1025.6px;width:37px;height:36.4px;border-radius:15px;background:radial-gradient(circle at 50% 35%,#2f7bff 0,#0b5cff 60%,#0a4fe0 100%)"></div>
<div class="t" style="left:1197.4px;top:1037.4px;font-size:9.6px;font-weight:700;color:#fff;letter-spacing:.15px;transform:scaleX(1.12);transform-origin:0 50%">zoom</div>
<div class="abs" style="left:1197.8px;top:1068.4px;width:24.6px;height:4px;border-radius:2px;background:#1a7bd8"></div>
<!-- chrome -->
<svg style="left:1257.4px;top:1026.6px" width="36" height="36" viewBox="0 0 36 36"><circle cx="18" cy="18" r="17.8" fill="#fff"/><path d="M18 .2 A17.8 17.8 0 0 1 33.400 9.100 L18 9.100 A8.900 8.900 0 0 0 10.300 13.550 L2.600 9.100 A17.8 17.8 0 0 1 18 .2Z" fill="#e33b2e"/><path d="M33.4 9.100 A17.8 17.8 0 0 1 18 35.800 L25.700 22.450 A8.900 8.900 0 0 0 25.700 13.550 L26 9.100Z" fill="#fcc934"/><path d="M18 35.800 A17.8 17.8 0 0 1 2.600 9.100 L10.300 22.450 A8.900 8.900 0 0 0 18 26.900 L25.700 22.450Z" fill="#1fa463"/><path d="M18 9.100 H33.400 L25.700 13.550Z" fill="#e33b2e"/><circle cx="18" cy="18" r="8.200" fill="#fff"/><circle cx="18" cy="18" r="6.600" fill="#3b86f7"/></svg>
<div class="abs" style="left:1277.4px;top:1019.8px;width:22.4px;height:22.4px;border-radius:50%;background:#b5351c"></div>
<div class="t" style="left:1284.2px;top:1025.4px;font-size:11.6px;font-weight:700;color:#f6d9d0">E</div>
<div class="abs" style="left:1272px;top:1068.6px;width:9px;height:3.8px;border-radius:2px;background:#8b8d86"></div>
<!-- powerpoint -->
<svg style="left:1323.6px;top:1027px" width="36" height="34" viewBox="0 0 36 34"><circle cx="20.600" cy="17" r="15.400" fill="#ed6c47"/><path d="M20.600 1.600 A15.400 15.400 0 0 1 36 17 H20.600Z" fill="#ff8f6b"/><path d="M5.200 17 H36 A15.400 15.400 0 0 1 5.200 17Z" fill="#d35230"/><rect x="0" y="8" width="18.400" height="18.400" rx="1.800" fill="#c43e1c"/><path d="M6 22.400 V12 H10 Q13.600 12 13.600 15.400 Q13.600 18.800 10 18.800 H6" fill="none" stroke="#fff" stroke-width="2.200"/></svg>
<div class="abs" style="left:1338px;top:1068.6px;width:9px;height:3.8px;border-radius:2px;background:#8b8d86"></div>
<!-- tray -->
<svg style="left:1477px;top:1038px" width="18" height="11" viewBox="0 0 18 11" fill="none" stroke="#222" stroke-width="2" stroke-linecap="round" stroke-linejoin="round"><path d="M1.600 9.400 L9 1.800 L16.400 9.400"/></svg>
<svg style="left:1521px;top:1033px" width="26" height="22" viewBox="0 0 26 22" fill="none" stroke="#2a2a2a" stroke-width="1.500" stroke-linecap="round"><path d="M6 17.600 C2.600 17.600 1 15.400 1 13 C1 10.400 3 8.600 5.400 8.600 C6 5 9 3 12 3 C15.400 3 17.800 5 18.600 8 C22 8 24.600 10 24.600 13 C24.600 15.800 22.600 17.600 20 17.600Z" fill="#b9bab6"/><path d="M3 1 L22.600 20.600"/></svg>
<svg style="left:1572.600px;top:1031px" width="19" height="26" viewBox="0 0 19 26" fill="none" stroke="#2b5cc7" stroke-width="1.700" stroke-linecap="round"><rect x="5.200" y="1" width="8.600" height="14.400" rx="4.300"/><path d="M1.400 11.600 C1.400 16.600 5 19.600 9.500 19.600 C14 19.600 17.600 16.600 17.600 11.600 M9.500 19.800 V24.600"/></svg>
<div class="t" style="left:1622px;top:1036.4px;font-size:17px;color:#222;letter-spacing:-.4px">ENG</div>
<svg style="left:1683.400px;top:1031.400px" width="26" height="25" viewBox="0 0 26 25" fill="none" stroke="#222" stroke-width="1.500" stroke-linejoin="round"><path d="M17 17 H1 V1.400 H17 M17 14 V17"/><path d="M5.600 23.400 H19 M9.600 17.200 V23.400"/><rect x="19.200" y=".8" width="5" height="7.400" rx="1.400"/><path d="M21.700 8.200 V23.400"/></svg>
<svg style="left:1719px;top:1034.600px" width="26" height="19" viewBox="0 0 26 19" fill="none" stroke="#222" stroke-width="1.500" stroke-linejoin="round" stroke-linecap="round"><path d="M1.400 6.400 H5 L10.400 1.400 V17.400 L5 12.400 H1.400Z"/><path d="M13.800 6 C15.200 7.800 15.200 11 13.800 12.800 M16.800 3.400 C19.400 6.400 19.400 12.400 16.800 15.400"/><path d="M20 1.200 C23.400 5.400 23.400 13.400 20 17.600" stroke="#b5b6b2"/></svg>
<svg style="left:1755px;top:1032px" width="26" height="20" viewBox="0 0 26 20" fill="none" stroke="#222" stroke-width="1.500" stroke-linejoin="round"><path d="M9 4.400 H19.600 Q22 4.400 22 6.800 V15.200 Q22 17.600 19.600 17.600 H3.400 Q1 17.600 1 15.200 V12"/><path d="M22.400 9 H24 Q24.800 9 24.800 9.800 V12.200 Q24.800 13 24 13 H22.400" fill="#222"/><path d="M6.600 .6 L2 8 H5.600 L3.400 14 L9 6.200 H5.600Z" fill="#222" stroke-width=".6"/><path d="M3.400 14.400 L8 9.600 V14.400Z" fill="#222" stroke="none"/></svg>
<div class="t" style="right:29.600px;top:1024.1px;font-size:17px;color:#222;letter-spacing:-.1px">15:37</div>
<div class="t" style="right:29.600px;top:1047.9px;font-size:17px;color:#222;letter-spacing:.15px">24.11.2025</div>
</body>
</html>
